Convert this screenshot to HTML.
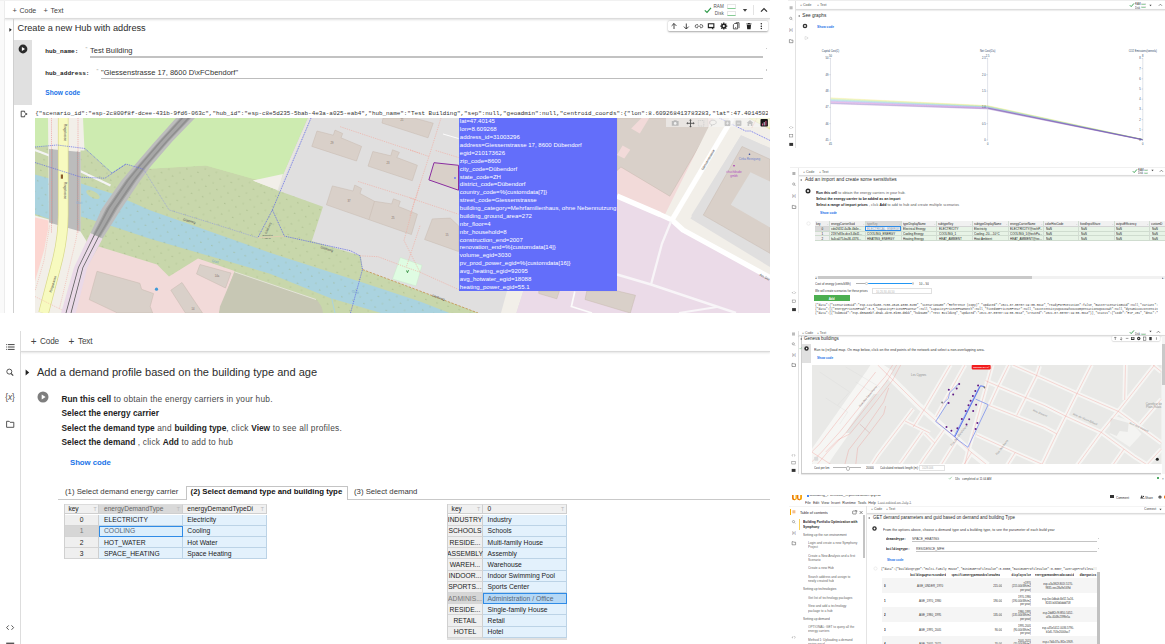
<!DOCTYPE html>
<html lang="en"><head><meta charset="utf-8"><title>Colab notebook screenshots</title>
<style>
html,body{margin:0;padding:0;background:#fff}
body{width:1165px;height:644px;position:relative;overflow:hidden;font-family:"Liberation Sans",sans-serif}
.panel{position:absolute;overflow:hidden;background:#fff}
.t{position:absolute;white-space:nowrap;margin:0}
.b{position:absolute;margin:0}
svg{overflow:hidden;display:block}
</style></head><body>
<div class="panel" style="left:0;top:0;width:770px;height:312.7px">
<div class="b" style="left:0px;top:0px;width:770px;height:1px;background:#f1f1f1;"></div>
<div class="b" style="left:4px;top:1px;width:1px;height:315px;background:#ececec;"></div>
<div class="b" style="left:0px;top:1px;width:4px;height:315px;background:#fafafa;"></div>
<div class="t" style='left:12.5px;top:5.53px;font:400 7.5px/9.75px "Liberation Sans",sans-serif;color:#444;'>+</div>
<div class="t" style='left:19.5px;top:5.95px;font:400 7px/9.1px "Liberation Sans",sans-serif;color:#444;'>Code</div>
<div class="t" style='left:43.5px;top:5.53px;font:400 7.5px/9.75px "Liberation Sans",sans-serif;color:#444;'>+</div>
<div class="t" style='left:50.5px;top:5.95px;font:400 7px/9.1px "Liberation Sans",sans-serif;color:#444;'>Text</div>
<div class="b" style="left:5px;top:17.5px;width:765px;height:1px;background:#dcdcdc;box-shadow:0 1px 2px rgba(0,0,0,.18)"></div>
<div class="b" style="left:13px;top:19px;width:1px;height:297px;background:#cfcfcf;"></div>
<svg class="b" style="left:7.5px;top:25.5px" width="6" height="8" viewBox="0 0 6 8"><path d="M1.4 1.9 L3.7 3.8 L1.4 5.700Z" fill="#222"/></svg>
<div class="t" style='left:17.5px;top:23.32px;font:400 9.2px/11.96px "Liberation Sans",sans-serif;color:#2a2a2a;'>Create a new Hub with address</div>
<div class="b" style="left:14px;top:40px;width:18px;height:64.5px;background:#e0e0e0;"></div>
<svg class="b" style="left:18px;top:44px" width="10" height="10" viewBox="0 0 10 10"><circle cx="5" cy="5" r="4.4" fill="#2b2b2b"/><path d="M3.9 2.9 L7 5 L3.9 7.1Z" fill="#fff"/></svg>
<div class="t" style='left:45.3px;top:48.2px;font:700 6.15px/8.0px "Liberation Mono",monospace;color:#222;'>hub_name:</div>
<div class="t" style='left:85.5px;top:46.25px;font:400 5px/6.5px "Liberation Sans",sans-serif;color:#9a9a9a;'>"</div>
<div class="t" style='left:90px;top:46.33px;font:400 7.5px/9.75px "Liberation Sans",sans-serif;color:#333;'>Test Building</div>
<div class="b" style="left:90px;top:56.4px;width:673px;height:1.4px;background:#c2c2c2;"></div>
<div class="t" style='left:45.3px;top:69.6px;font:700 6.15px/8.0px "Liberation Mono",monospace;color:#222;'>hub_address:</div>
<div class="t" style='left:96.5px;top:67.75px;font:400 5px/6.5px "Liberation Sans",sans-serif;color:#9a9a9a;'>"</div>
<div class="t" style='left:101px;top:68.03px;font:400 7.5px/9.75px "Liberation Sans",sans-serif;color:#333;'>"Giessenstrasse 17, 8600 D\xFCbendorf"</div>
<div class="b" style="left:101px;top:78px;width:662px;height:1px;background:#bdbdbd;"></div>
<div class="b" style="left:765.5px;top:47.8px;width:1.6px;height:1.6px;background:#c8c8c8;"></div>
<div class="b" style="left:765.5px;top:69.2px;width:1.6px;height:1.6px;background:#c8c8c8;"></div>
<div class="t" style='left:45.3px;top:88.81px;font:700 6.6px/8.58px "Liberation Sans",sans-serif;color:#1a73e8;'>Show code</div>
<svg class="b" style="left:702.5px;top:5.4px" width="10" height="10" viewBox="0 0 10 10"><path d="M1.800 5.400 L4 7.400 L8 2.800" stroke="#2e9a48" stroke-width="1.2" fill="none"/></svg>
<div class="t" style='left:713.5px;top:4.21px;font:400 4.6px/5.98px "Liberation Sans",sans-serif;color:#555;'>RAM</div>
<div class="t" style='left:714.8px;top:11.31px;font:400 4.6px/5.98px "Liberation Sans",sans-serif;color:#555;'>Disk</div>
<div class="b" style="left:726.8px;top:4.1px;width:9.6px;height:4.8px;background:#fff;box-sizing:border-box;border:0.5px solid #e6e6e6;border-bottom:0.9px solid #86cc95"></div>
<div class="b" style="left:726.8px;top:11.3px;width:9.6px;height:4.8px;background:#fff;box-sizing:border-box;border:0.5px solid #e6e6e6;border-bottom:0.9px solid #86cc95"></div>
<svg class="b" style="left:742px;top:8px" width="6" height="5" viewBox="0 0 6 5"><path d="M0.8 1 L5.2 1 L3 3.8Z" fill="#444"/></svg>
<div class="b" style="left:753px;top:5px;width:1px;height:10px;background:#e3e3e3;"></div>
<svg class="b" style="left:760px;top:7px" width="8" height="6" viewBox="0 0 8 6"><path d="M1 4.6 L4 1.6 L7 4.6" stroke="#333" stroke-width="1.3" fill="none"/></svg>
<div class="b" style="left:668px;top:20.8px;width:100px;height:10px;background:#fff;border-radius:1.5px;box-shadow:0 0.5px 2px rgba(0,0,0,.35)"></div>
<svg class="b" style="left:668px;top:20.5px" width="100" height="10" viewBox="668 21.5 100 10">
<g stroke="#333" stroke-width="0.9" fill="none">
<path d="M674 29.5 V24 M671.6 26.4 L674 24 L676.4 26.4"/>
<path d="M686.3 24 V29.5 M683.9 27.1 L686.3 29.5 L688.7 27.1"/>
<path d="M698 25.2 h-1.3 a1.5 1.5 0 0 0 0 3 h1.3 M700 25.2 h1.3 a1.5 1.5 0 0 1 0 3 h-1.3 M697.3 26.7 h3.4" stroke="#555"/>
</g>
<path d="M707.8 23.8 h6.6 v5 h-1.2 v1.4 l-1.6 -1.4 h-3.8z" fill="#222"/><rect x="708.9" y="24.8" width="4.4" height="2.6" fill="#fff"/>
<g transform="translate(723.8 26.6)"><circle r="2.6" fill="#222"/><g stroke="#222" stroke-width="1.3"><path d="M0 -3.5V3.5M-3.5 0H3.5M-2.5 -2.5L2.5 2.5M-2.5 2.5L2.5 -2.5"/></g><circle r="1.1" fill="#fff"/></g>
<path d="M734.6 24 h3 v5.4 h-4.2 v-4.2z" fill="none" stroke="#333" stroke-width="0.8"/><path d="M735.8 23.2 h3.2 v5.4" fill="none" stroke="#333" stroke-width="0.8"/><path d="M735.2 27.5 l1.2 .8 l-1.2 .8z" fill="#333"/>
<path d="M746.8 25.2 h4.2 l-.4 4.6 h-3.4z M746.3 24 h5.2 v.8 h-5.2z M748 23.4 h1.8 v.7 h-1.8z" fill="#222"/>
<g fill="#222"><circle cx="761.3" cy="24.3" r=".75"/><circle cx="761.3" cy="26.7" r=".75"/><circle cx="761.3" cy="29.1" r=".75"/></g>
</svg>
<svg class="b" style="left:19.5px;top:110px" width="9" height="8" viewBox="0 0 9 8"><path d="M4.6 1.2 H1.2 V6.8 H4.6 M4.6 1.2 V2.6 M4.6 6.8 V5.4" stroke="#333" stroke-width="0.9" fill="none"/><path d="M5.4 2.6 L7.6 4 L5.4 5.4Z" fill="#333"/></svg>
<div class="t" style='left:35.2px;top:109.75px;font:400 5.92px/7.7px "Liberation Mono",monospace;color:#333;width:732.6px;overflow:hidden;white-space:nowrap;'>{"scenario_id":"esp-2c800f8f-dcee-431b-9fd6-063c","hub_id":"esp-c8e5d235-5bab-4e3a-a025-eab4","hub_name":"Test Building","sep":null,"geoadmin":null,"centroid_coords":{"lon":8.609268413783283,"lat":47.40145020296136,"alt":null}}</div>
<svg class="b" style="left:35px;top:117.5px" width="735" height="195" viewBox="35 117.5 735 195">
<defs><pattern id="dots" width="11.6" height="11" patternUnits="userSpaceOnUse" patternTransform="rotate(17)"><circle cx="2" cy="2" r=".62" fill="#9aae7c" opacity=".7"/><circle cx="7.6" cy="7.4" r=".62" fill="#9aae7c" opacity=".7"/></pattern></defs>
<rect x="35" y="117.5" width="735" height="195" fill="#e0dfdf"/>
<polygon points="35,117.5 307.5,117.5 278.5,184 277.5,189.7 279.2,190.5 323,206.3 311.8,240.5 360.8,255.3 362.5,269 420,290.5 478.7,312.5 35,312.5" fill="#c8d7ab" />
<polygon points="35,117.5 307.5,117.5 279.5,182 254,178.5 206,165 143.5,168.5 126,163.5 112,172.5 85,148 57,144.7 35,146.5" fill="#cdebb0" />
<polygon points="253,180 283,173.5 277.5,189.5" fill="#f2efe9" />
<polyline points="309.5,117.5 277.5,190" fill="none" stroke="#e9e6df" stroke-width="1.6" />
<polygon points="81,183 112,193 150,209.7 220,234.5 270,252.3 362.5,282 420,301 449.5,312.5 381,312.5 330,297.4 270,273.2 220,258.6 150,238.3 110.7,225.3 81,216" fill="#aad3df" />
<polygon points="35,174 49.5,178 49.5,218.5 35,213.5" fill="#aad3df" />
<ellipse cx="93" cy="194" rx="7.5" ry="3.2" transform="rotate(28 93 194)" fill="#c8d7ab"/>
<polygon points="35,117.5 307.5,117.5 278.5,184 277.5,189.7 279.2,190.5 323,206.3 311.8,240.5 360.8,255.3 362.5,269 420,290.5 478.7,312.5 35,312.5" fill="url(#dots)"/>
<polygon points="35,117.5 307.5,117.5 279.5,182 254,178.5 206,165 143.5,168.5 126,163.5 112,172.5 85,148 57,144.7 35,146.5" fill="#cdebb0" />
<polygon points="253,180 283,173.5 277.5,189.5" fill="#f2efe9" />
<polyline points="35,149.5 52,156" fill="none" stroke="#f4f4f4" stroke-width="2.2" />
<polyline points="80,170.5 110.5,185" fill="none" stroke="#f4f4f4" stroke-width="2.4" />
<polygon points="98.7,246 157,264 169,276 198,258 234.6,270.5 219,312.5 60,312.5" fill="#f2dad9" />
<path d="M234.6 271.4 L316 299 Q322 304 323 312.5 L219 312.5 L220 306 Z" fill="#c7c7b4"/>
<polyline points="234.6,271.4 316,299" fill="none" stroke="#e4e4d8" stroke-width="1" />
<polygon points="48,117.5 83,117.5 84.5,150 80.5,150 80.5,231 86.6,240.7 63.5,312.5 35,312.5 35,215 49,219" fill="#f2efe9" />
<polygon points="35,217 48.5,220 48.2,228 44,250 35,281" fill="#fcd6d1" />
<polygon points="49,148.5 80.6,151.5 80.6,231 49,222" fill="#bcbcbc" />
<polyline points="52,148.5 52,223" fill="none" stroke="#a8a8a8" stroke-width="1.2" />
<polyline points="77.5,151 77.5,230" fill="none" stroke="#a8a8a8" stroke-width="1.2" />
<path d="M63.2 117.5 L63.2 215 Q63 240 55.5 267 L43.6 312.5" fill="none" stroke="#d9d98a" stroke-width="10.6"/>
<path d="M63.2 117.5 L63.2 215 Q63 240 55.5 267 L43.6 312.5" fill="none" stroke="#f7fabf" stroke-width="9.2"/>
<polyline points="51.5,117.5 51.5,232" fill="none" stroke="#ee9090" stroke-width="0.6" stroke-dasharray="1.2 0.9"/>
<polyline points="78,117.5 78,232" fill="none" stroke="#ee9090" stroke-width="0.6" stroke-dasharray="1.2 0.9"/>
<polyline points="78.2,225 76,239 59.3,308.8" fill="none" stroke="#f0a8a0" stroke-width="0.5" stroke-dasharray="1.2 0.9"/>
<polyline points="49.6,225 44,260 35,290.7" fill="none" stroke="#f0a8a0" stroke-width="0.5" stroke-dasharray="1.2 0.9"/>
<polyline points="35,296 63,310" fill="none" stroke="#f0a8a0" stroke-width="0.5" stroke-dasharray="1.2 0.9"/>
<polygon points="90.5,232.4 74.0,267 61.4,311.6 61.0,313 75.8,313 76.1,311.6 87.3,267 102.6,238.0" fill="#ead9e8" />
<polygon points="185.5,107 176,117.5 153.6,142.5 133.0,166.5 121.5,180 102.0,208 94.2,224.7 90.5,232.4 102.6,238.0 111.0,224.7 121.5,208 140.3,180 150.2,166.5 172.5,140.7 195,117.5 204.5,107" fill="#bdbdbd" />
<polygon points="189.3,107.0 179.8,117.5 157.38,142.14 136.44,166.5 125.26,180.0 105.9,208.0 97.56,224.7 92.92,233.52 100.18,236.88 107.64,224.7 117.6,208.0 136.54,180.0 146.76,166.5 168.72,141.06 191.2,117.5 200.7,107.0" fill="#a6a6a6" />
<polygon points="190.63,107.0 181.13,117.5 158.7,142.01 137.64,166.5 126.58,180.0 107.27,208.0 98.74,224.7 93.77,233.91 95.22,234.58 100.75,224.7 109.61,208.0 128.83,180.0 139.71,166.5 160.97,141.8 183.41,117.5 192.91,107.0" fill="#8f8f8f" />
<polygon points="197.09,107.0 187.59,117.5 165.13,141.4 143.49,166.5 132.97,180.0 113.89,208.0 104.45,224.7 97.88,235.82 99.33,236.49 106.46,224.7 116.23,208.0 135.22,180.0 145.56,166.5 167.4,141.19 189.87,117.5 199.37,107.0" fill="#8f8f8f" />
<polygon points="94.13,234.08 77.99,267.0 65.81,311.6 65.44,313.0 66.33,313.0 66.69,311.6 78.79,267.0 94.86,234.42" fill="#5f5f5f" />
<polygon points="98.24,235.98 82.51,267.0 70.81,311.6 70.47,313.0 71.36,313.0 71.69,311.6 83.31,267.0 98.97,236.32" fill="#5f5f5f" />
<polygon points="97,270.8 139.9,282.8 141.6,288.8 153.6,293.1 150.2,306 152.7,312.5 117.5,312.5 89.2,299.1" fill="#d9d0c9" stroke="#c7b9ae" stroke-width="0.5"/>
<polygon points="170.8,289.7 182,282 202.5,312.5 185.4,312.5" fill="#d9d0c9" stroke="#c7b9ae" stroke-width="0.5"/>
<polygon points="200,264 231,272.5 225.5,287.5 196.5,273.4" fill="#d9d0c9" stroke="#c7b9ae" stroke-width="0.5"/>
<polygon points="317,130.5 333.3,134.7 335,129.6 342.7,133 341,137.3 361.6,145.9 356.5,160.5 311.8,145.9" fill="#d9d0c9" stroke="#c7b9ae" stroke-width="0.5"/>
<polygon points="372.8,151 390.8,155.3 392.5,149.3 399.4,151.9 396.8,157 417.4,164.8 412.3,180.2 368,165.6" fill="#d9d0c9" stroke="#c7b9ae" stroke-width="0.5"/>
<polygon points="383,117.5 414,117.5 433.2,122.7 428,137.3 382,122.5" fill="#d9d0c9" stroke="#c7b9ae" stroke-width="0.5"/>
<polygon points="332.4,185.4 353,190.5 354.8,184.5 361.6,188 360,193 374.5,200.8 391.7,203.4 393.4,198.3 400.3,200.8 398.5,206 417.4,213.7 411.4,234 326.4,204.3" fill="#d9d0c9" stroke="#c7b9ae" stroke-width="0.5"/>
<polyline points="374.5,200.8 369,219" fill="none" stroke="#c7b9ae" stroke-width="0.5" />
<polygon points="432.3,218.4 450.3,217.6 458.5,225.3 458.5,251 424.6,239" fill="#d9d0c9" stroke="#c7b9ae" stroke-width="0.5"/>
<polygon points="434,162.2 458.5,164.8 458.5,189.7 428.9,179.4" fill="#d9d0c9" stroke="#8a2da0" stroke-width="1"/>
<circle cx="455" cy="177.5" r="0.9" fill="#636efa"/>
<polygon points="400.3,257 422,264.8 416,285.4 392.5,278.5" fill="#dffce2" stroke="#c3e6c6" stroke-width="0.4"/>
<path d="M406.5 270 l1 2.2 l1 -2.6" stroke="#2e8b3a" stroke-width="0.9" fill="none"/>
<polyline points="340.2,126.2 420,152.8" fill="none" stroke="#f2a79c" stroke-width="0.6" stroke-dasharray="1.3 1"/>
<polyline points="358.2,181 415.7,199 420,183.7" fill="none" stroke="#f2a79c" stroke-width="0.6" stroke-dasharray="1.3 1"/>
<polyline points="441,117.5 429,156 415,199 410,215" fill="none" stroke="#f2a79c" stroke-width="0.6" stroke-dasharray="1.3 1"/>
<polyline points="410,149.5 429,156" fill="none" stroke="#f2a79c" stroke-width="0.6" stroke-dasharray="1.3 1"/>
<polyline points="435.7,150 458.5,157" fill="none" stroke="#f2a79c" stroke-width="0.6" stroke-dasharray="1.3 1"/>
<polyline points="410,197.5 458.5,213.7" fill="none" stroke="#f2a79c" stroke-width="0.6" stroke-dasharray="1.3 1"/>
<polyline points="415,199 404,240 420,271.7 458.5,289" fill="none" stroke="#f2a79c" stroke-width="0.6" stroke-dasharray="1.3 1"/>
<polyline points="360,255.3 378,256.2 405.4,266.5 420,271.7" fill="none" stroke="#f2a79c" stroke-width="0.6" stroke-dasharray="1.3 1"/>
<polyline points="420,225.3 406.3,266.5" fill="none" stroke="#f2a79c" stroke-width="0.6" stroke-dasharray="1.3 1"/>
<polyline points="443,133.5 458.5,138" fill="none" stroke="#ffffff" stroke-width="0.9" />
<polyline points="35,146.5 57,144.5 85,148 112,172.5 126,163.5 143.5,168.7" fill="none" stroke="#5d67e6" stroke-width="0.7" stroke-dasharray="1.1 0.8"/>
<polyline points="35,162 81.5,176.8 105,177.7 126,163.5" fill="none" stroke="#5d67e6" stroke-width="0.7" stroke-dasharray="1.1 0.8"/>
<polyline points="143.5,168.7 169,209.4 220,225.3 257.8,237.3" fill="none" stroke="#8088e8" stroke-width="0.5" stroke-dasharray="1.1 0.8"/>
<polyline points="311,117.5 272.4,209.4 257.8,237.3" fill="none" stroke="#5d67e6" stroke-width="0.8" stroke-dasharray="1.1 0.8"/>
<polyline points="272.4,209.4 284.4,235.6 350.5,250.2 360,255.3 362.5,269 350.5,312.5" fill="none" stroke="#5d67e6" stroke-width="0.8" stroke-dasharray="1.1 0.8"/>
<polyline points="257.8,237.3 284.4,235.6" fill="none" stroke="#efc8b4" stroke-width="0.6" />
<polyline points="362.5,269 420,290.5 478,312.5" fill="none" stroke="#c6975a" stroke-width="0.9" stroke-dasharray="2.4 1.4"/>
<polyline points="331.6,297.4 335,312.5" fill="none" stroke="#aad3df" stroke-width="1" />
<text transform="translate(63.6 132) rotate(90) scale(.25)" font-family="Liberation Sans, sans-serif" font-size="13.2" font-weight="400" fill="#444" text-anchor="middle">Ringstrasse</text>
<text transform="translate(63.6 190) rotate(90) scale(.25)" font-family="Liberation Sans, sans-serif" font-size="13.2" font-weight="400" fill="#444" text-anchor="middle">Ringstrasse</text>
<text transform="translate(54 284) rotate(-73) scale(.25)" font-family="Liberation Sans, sans-serif" font-size="13.2" font-weight="400" fill="#444" text-anchor="middle">Ringstrasse</text>
<text transform="translate(189 221.5) rotate(14) scale(.25)" font-family="Liberation Sans, sans-serif" font-size="13.2" font-weight="400" fill="#555" text-anchor="middle">Glattweg</text>
<text transform="translate(326.5 249.5) rotate(16) scale(.25)" font-family="Liberation Sans, sans-serif" font-size="13.2" font-weight="400" fill="#555" text-anchor="middle">Glattweg</text>
<text transform="translate(438 298) rotate(18) scale(.25)" font-family="Liberation Sans, sans-serif" font-size="13.2" font-weight="400" fill="#555" text-anchor="middle">Glattweg</text>
<text transform="translate(269 228) rotate(-66) scale(.25)" font-family="Liberation Sans, sans-serif" font-size="12" font-weight="400" fill="#555" text-anchor="middle">Glattweg</text>
<text transform="translate(267.5 235) scale(.25)" font-family="Liberation Sans, sans-serif" font-size="9.6" font-weight="400" fill="#555" text-anchor="middle">Djamoent</text>
<text transform="translate(267.5 238.6) scale(.25)" font-family="Liberation Sans, sans-serif" font-size="9.6" font-weight="400" fill="#555" text-anchor="middle">430 m</text>
<text transform="translate(215 262) rotate(14) scale(.25)" font-family="Liberation Sans, sans-serif" font-size="13.6" font-weight="400" fill="#7aa7c8" text-anchor="middle">Glatt</text>
<text transform="translate(355 292.5) rotate(14) scale(.25)" font-family="Liberation Sans, sans-serif" font-size="13.6" font-weight="400" fill="#7aa7c8" text-anchor="middle">Glatt</text>
<text transform="translate(79 203) scale(.25)" font-family="Liberation Sans, sans-serif" font-size="12.8" font-weight="400" fill="#8fb3d6" text-anchor="middle">Glatt</text>
<text transform="translate(332 143.5) scale(.25)" font-family="Liberation Sans, sans-serif" font-size="10.4" font-weight="400" fill="#7a6a60" text-anchor="middle">29</text>
<text transform="translate(388 163) scale(.25)" font-family="Liberation Sans, sans-serif" font-size="10.4" font-weight="400" fill="#7a6a60" text-anchor="middle">23</text>
<text transform="translate(349 201) scale(.25)" font-family="Liberation Sans, sans-serif" font-size="10.4" font-weight="400" fill="#7a6a60" text-anchor="middle">37</text>
<text transform="translate(393 218) scale(.25)" font-family="Liberation Sans, sans-serif" font-size="10.4" font-weight="400" fill="#7a6a60" text-anchor="middle">25</text>
<text transform="translate(402 120.5) scale(.25)" font-family="Liberation Sans, sans-serif" font-size="10.4" font-weight="400" fill="#7a6a60" text-anchor="middle">21</text>
<text transform="translate(217 276.5) scale(.25)" font-family="Liberation Sans, sans-serif" font-size="10.4" font-weight="400" fill="#7a6a60" text-anchor="middle">14a</text>
<text transform="translate(193 309) scale(.25)" font-family="Liberation Sans, sans-serif" font-size="10.4" font-weight="400" fill="#7a6a60" text-anchor="middle">14</text>
<text transform="translate(447 235) scale(.25)" font-family="Liberation Sans, sans-serif" font-size="10.4" font-weight="400" fill="#7a6a60" text-anchor="middle">15</text>
<rect x="60.8" y="174" width="2.2" height="4.2" fill="#8b5a2b"/>
<circle cx="156.5" cy="288.7" r="1.6" fill="#3f9ad8"/>
<polygon points="507,290.5 523.3,290.5 516.4,312.5 501,312.5" fill="#f2efe9" />
<polygon points="523.3,290.5 617,290.5 617,195 672,219 770,277 770,312.5 516.4,312.5" fill="#ebdbe8" />
<polygon points="617,270 617,312.5 560,312.5 520,312.5 523.3,290.5 617,290.5" fill="#ebdbe8" />
<polygon points="617,117.5 713,117.5 666.4,214.6 617,194" fill="#f2dad9" />
<polygon points="617,117.5 707.6,117.5 708.5,129.6 669.8,195.7 620.9,166.5 617,170" fill="#d9d0c9" stroke="#c7b9ae" stroke-width="0.5"/>
<polygon points="641.5,117.5 649.2,117.5 639.8,133 631.2,127.9" fill="#f2dad9" />
<polygon points="622.6,145 630.3,149.3 624.3,158 617,154.5" fill="#f2dad9" />
<polygon points="713,117.5 770,117.5 770,147.6 741,134.7 690.4,218 770,266.5 770,277 672,222 664,216" fill="#f2efe9" />
<polygon points="741,134.7 770,147.6 770,259.6 691.3,215" fill="#e0dfdf" />
<polygon points="742,146 770,158.8 770,252.8 703.3,214.6" fill="#d9d0c9" stroke="#c7b9ae" stroke-width="0.5"/>
<polygon points="750.5,171.7 770,181 770,227 730.8,204.3" fill="#dfdfdf" />
<polygon points="748.6,117.4 770,117.4 770,128.5" fill="#f6f9c0" stroke="#d5d78f" stroke-width="0.5"/>
<polyline points="719.2,117.4 745.5,130.5 750.6,130.5 770.7,140.3" fill="none" stroke="#7378ee" stroke-width="0.9" stroke-dasharray="1.1 0.8"/>
<polyline points="757,117.5 752,127" fill="none" stroke="#f2a79c" stroke-width="0.5" />
<polyline points="732.5,117.5 672,219.5" fill="none" stroke="#ffffff" stroke-width="5.2" />
<polyline points="617,195.5 660,214 672,219.5 683,229.5 770,277" fill="none" stroke="#ffffff" stroke-width="5.2" stroke-linejoin="round"/>
<polyline points="671,221 662,243 651,284" fill="none" stroke="#f8f5f8" stroke-width="2.3" />
<polyline points="617,274 651,284 736,312.5" fill="none" stroke="#f8f5f8" stroke-width="2.4" />
<polyline points="679,312.5 717,306.5" fill="none" stroke="#f8f5f8" stroke-width="2" />
<polyline points="574.8,291 571.4,306 592,312.5" fill="none" stroke="#fbfbfb" stroke-width="1.7" />
<polygon points="538.8,290.5 559.4,290.5 556.8,298.3 538.8,293" fill="#d9d0c9" stroke="#c7b9ae" stroke-width="0.5"/>
<polygon points="586.8,290.5 617.5,290.5 635.5,294.8 630.3,312.5 620,309.5 585,299" fill="#d9d0c9" stroke="#c7b9ae" stroke-width="0.5"/>
<text transform="translate(709 160) rotate(-60) scale(.25)" font-family="Liberation Sans, sans-serif" font-size="13.6" font-weight="400" fill="#333" text-anchor="middle">Giessenstrasse</text>
<text transform="translate(764 277.5) rotate(29) scale(.25)" font-family="Liberation Sans, sans-serif" font-size="13.2" font-weight="400" fill="#333" text-anchor="middle">Am Gie</text>
<text transform="translate(749.5 159) scale(.25)" font-family="Liberation Sans, sans-serif" font-size="12" font-weight="400" fill="#6b7fd0" text-anchor="middle">Cirka Reinigung</text>
<circle cx="749.5" cy="153.7" r=".8" fill="#34479c"/>
<text transform="translate(734 172) scale(.25)" font-family="Liberation Sans, sans-serif" font-size="12" font-weight="400" fill="#b24fc2" text-anchor="middle">chuchibude</text>
<text transform="translate(734 176) scale(.25)" font-family="Liberation Sans, sans-serif" font-size="12" font-weight="400" fill="#b24fc2" text-anchor="middle">gmbh</text>
<circle cx="734" cy="165.3" r=".8" fill="#a11fb0"/>
</svg>
<div class="b" style='left:458.5px;top:117.5px;width:158.5px;height:173px;background:#636efa;color:#fff;font:400 6.05px/7.87px "Liberation Sans",sans-serif;white-space:nowrap;overflow:hidden;padding:0.9px 0 0 1.3px;box-sizing:border-box'>lat=47.40145<br>lon=8.609268<br>address_id=31003296<br>address=Giessenstrasse 17, 8600 Dübendorf<br>egid=210173626<br>zip_code=8600<br>city_code=Dübendorf<br>state_code=ZH<br>district_code=Dübendorf<br>country_code=%{customdata[7]}<br>street_code=Giessenstrasse<br>building_category=Mehrfamilienhaus, ohne Nebennutzung<br>building_ground_area=272<br>nbr_floor=4<br>nbr_household=8<br>construction_end=2007<br>renovation_end=%{customdata[14]}<br>volume_egid=3030<br>pv_prod_power_egid=%{customdata[16]}<br>avg_heating_egid=92095<br>avg_hotwater_egid=18088<br>heating_power_egid=55.1</div>
<div class="b" style="left:666px;top:117.5px;width:104px;height:9.6px;background:rgba(246,246,246,.55)"></div>
<svg class="b" style="left:666px;top:117.5px" width="104" height="10" viewBox="666 117.5 104 10">
<g fill="#b9b9b9"><path d="M671.8 120.6 h1.6 l.7 -.9 h2.2 l.7 .9 h1.6 v4.6 h-6.8z"/><circle cx="675.2" cy="122.9" r="1.3" fill="#f3f3f3"/></g>
<g stroke="#4f4f4f" stroke-width="0.9" fill="none"><path d="M690.5 119.6 V126 M687.3 122.8 H693.7"/></g>
<g fill="#4f4f4f"><path d="M690.5 118.6 l1.3 1.5 h-2.6z M690.5 127 l1.3 -1.5 h-2.6z M686.3 122.8 l1.5 -1.3 v2.6z M694.7 122.8 l-1.5 -1.3 v2.6z"/></g>
<rect x="698.4" y="120" width="5.4" height="5.6" fill="none" stroke="#c4c4c4" stroke-width="0.7" stroke-dasharray="1 0.8"/>
<path d="M713 119.6 c-2.2 0 -3.4 1.2 -3.4 2.5 c0 1.2 1 2 2.2 2.1 l-.6 1.6 l1.4 -1.6 c2.4 0 3.6 -1.1 3.6 -2.3 c0 -1.3 -1.2 -2.3 -3.2 -2.3z" fill="none" stroke="#c6c6c6" stroke-width="0.7"/>
<g fill="#c4c4c4"><rect x="724.6" y="120" width="5.8" height="5.4" rx=".6"/><rect x="735.6" y="120" width="5.8" height="5.4" rx=".6"/><path d="M750 119.6 l3.4 3 h-1 v2.8 h-1.6 v-1.8 h-1.6 v1.8 h-1.6 v-2.8 h-1z"/></g>
<g stroke="#f3f3f3" stroke-width=".7"><path d="M726 122.7 h3 M727.5 121.2 v3 M737 122.7 h3"/></g>
<rect x="760.5" y="118.6" width="7.4" height="7.4" rx=".8" fill="#161616"/>
<g fill="#e05a8a"><rect x="762" y="123" width="1" height="2"/><rect x="763.7" y="121.6" width="1" height="3.4" fill="#d6d6f0"/><rect x="765.4" y="120.4" width="1" height="4.6"/></g>
</svg>

</div>
<div class="panel" style="left:0;top:322px;width:770px;height:322px">
<div style="position:absolute;left:0;top:-322px;width:770px;height:644px">
<div class="b" style="left:19.9px;top:331px;width:1px;height:313px;background:#dddddd;"></div>
<div class="t" style='left:30.8px;top:334.8px;font:400 10px/13.0px "Liberation Sans",sans-serif;color:#444;'>+</div>
<div class="t" style='left:40px;top:336.57px;font:400 8.2px/10.66px "Liberation Sans",sans-serif;color:#444;letter-spacing:-0.15px;'>Code</div>
<div class="t" style='left:68.6px;top:334.8px;font:400 10px/13.0px "Liberation Sans",sans-serif;color:#444;'>+</div>
<div class="t" style='left:78px;top:336.57px;font:400 8.2px/10.66px "Liberation Sans",sans-serif;color:#444;letter-spacing:-0.15px;'>Text</div>
<div class="b" style="left:21px;top:350.5px;width:749px;height:1px;background:#dadada;box-shadow:0 1px 2px rgba(0,0,0,.16)"></div>
<svg class="b" style="left:0;top:330px" width="20" height="314" viewBox="0 330 20 314">
<g stroke="#444" stroke-width="1"><path d="M8 344.6 H14.6 M8 347 H14.6 M8 349.4 H14.6"/><path d="M6.200 344.6 h1 M6.200 347 h1 M6.200 349.4 h1"/></g>
<circle cx="9.3" cy="371.6" r="2.5" fill="none" stroke="#444" stroke-width="0.9"/><path d="M11.1 373.5 L13.2 375.7" stroke="#444" stroke-width="1.1"/>
<path d="M6.600 421.300 h2.600 l.9 1 h3.700 v5 h-7.200z" fill="none" stroke="#444" stroke-width="0.9"/>
<path d="M8.7 625.4 L6.6 627.6 L8.7 629.8 M11.5 625.4 L13.6 627.6 L11.5 629.8" fill="none" stroke="#444" stroke-width="0.9"/>
<rect x="6.2" y="642.6" width="8" height="2" fill="#555"/>
</svg>
<div class="t" style='left:5.2px;top:392.67px;font:400 8.2px/10.66px "Liberation Sans",sans-serif;color:#4a4a4a;'>{<i>x</i>}</div>
<svg class="b" style="left:24px;top:367.5px" width="7" height="9" viewBox="0 0 7 9"><path d="M1.6 1.6 L5.2 4.5 L1.6 7.4Z" fill="#222"/></svg>
<div class="t" style='left:37px;top:364.61px;font:400 11.06px/14.38px "Liberation Sans",sans-serif;color:#2c2c2c;'>Add a demand profile based on the building type and age</div>
<svg class="b" style="left:37.2px;top:390.8px" width="12" height="12" viewBox="0 0 12 12"><circle cx="6" cy="6" r="5.5" fill="#7e7e7e"/><path d="M4.7 3.5 L8.6 6 L4.7 8.5Z" fill="#fff"/></svg>
<div class="t" style='left:61.5px;top:393.77px;font:400 8.35px/10.86px "Liberation Sans",sans-serif;color:#4a4a4a;letter-spacing:0.22px;'><b style="letter-spacing:0;color:#1f1f1f">Run this cell</b> to obtain the energy carriers in your hub.</div>
<div class="t" style='left:61.5px;top:408.47px;font:400 8.35px/10.86px "Liberation Sans",sans-serif;color:#4a4a4a;letter-spacing:0.22px;'><b style="letter-spacing:0;color:#1f1f1f">Select the energy carrier</b></div>
<div class="t" style='left:61.5px;top:422.87px;font:400 8.35px/10.86px "Liberation Sans",sans-serif;color:#4a4a4a;letter-spacing:0.22px;'><b style="letter-spacing:0;color:#1f1f1f">Select the demand type</b> and <b style="letter-spacing:0;color:#1f1f1f">building type</b>, click <b style="letter-spacing:0;color:#1f1f1f">View</b> to see all profiles.</div>
<div class="t" style='left:61.5px;top:436.57px;font:400 8.35px/10.86px "Liberation Sans",sans-serif;color:#4a4a4a;letter-spacing:0.22px;'><b style="letter-spacing:0;color:#1f1f1f">Select the demand</b> , click <b style="letter-spacing:0;color:#1f1f1f">Add</b> to add to hub</div>
<div class="t" style='left:70px;top:458.23px;font:700 7.8px/10.14px "Liberation Sans",sans-serif;color:#1a73e8;letter-spacing:-0.05px;'>Show code</div>
<div class="b" style="left:58px;top:499px;width:712px;height:1px;background:#c9c9c9;"></div>
<div class="b" style="left:186px;top:485.5px;width:161.5px;height:14.5px;background:#fff;border:1px solid #c4c4c4;border-bottom:none;box-sizing:border-box"></div>
<div class="t" style='left:65px;top:487.16px;font:400 7.75px/10.08px "Liberation Sans",sans-serif;color:#3a3a3a;'>(1) Select demand energy carrier</div>
<div class="t" style='left:190.6px;top:487.33px;font:700 7.8px/10.14px "Liberation Sans",sans-serif;color:#111;'>(2) Select demand type and building type</div>
<div class="t" style='left:354px;top:487.16px;font:400 7.75px/10.08px "Liberation Sans",sans-serif;color:#3a3a3a;'>(3) Select demand</div>
<div class="b" style="left:63.8px;top:503.7px;width:35.6px;height:10.8px;background:#f0f0f0;border-right:1px solid #cfcfcf;border-bottom:1px solid #cfcfcf;border-top:1px solid #dcdcdc;box-sizing:border-box"></div>
<div class="t" style='left:68.39999999999999px;top:505.31px;font:400 6.6px/8.58px "Liberation Sans",sans-serif;color:#222;'>key</div>
<div class="t" style='left:93.4px;top:506.12px;font:400 5.2px/6.76px "Liberation Sans",sans-serif;color:#b8b8b8;'>T</div>
<div class="b" style="left:99.4px;top:503.7px;width:83.3px;height:10.8px;background:#d9d9d9;border-right:1px solid #cfcfcf;border-bottom:1px solid #cfcfcf;border-top:1px solid #dcdcdc;box-sizing:border-box"></div>
<div class="t" style='left:104.0px;top:505.31px;font:400 6.6px/8.58px "Liberation Sans",sans-serif;color:#666;'>energyDemandType</div>
<div class="t" style='left:176.7px;top:506.12px;font:400 5.2px/6.76px "Liberation Sans",sans-serif;color:#b8b8b8;'>T</div>
<div class="b" style="left:182.7px;top:503.7px;width:84.1px;height:10.8px;background:#f0f0f0;border-right:1px solid #cfcfcf;border-bottom:1px solid #cfcfcf;border-top:1px solid #dcdcdc;box-sizing:border-box"></div>
<div class="t" style='left:187.29999999999998px;top:505.31px;font:400 6.6px/8.58px "Liberation Sans",sans-serif;color:#222;'>energyDemandTypeDi</div>
<div class="t" style='left:260.79999999999995px;top:506.12px;font:400 5.2px/6.76px "Liberation Sans",sans-serif;color:#b8b8b8;'>T</div>
<div class="b" style="left:63.8px;top:514.5px;width:35.6px;height:11.22px;background:#efefef;border-right:1px solid #cfcfcf;border-bottom:1px solid #d4d4d4;box-sizing:border-box"></div>
<div class="t" style='left:63.8px;top:516.12px;font:400 6.75px/8.78px "Liberation Sans",sans-serif;color:#222;text-align:center;width:35.6px;overflow:hidden;'>0</div>
<div class="b" style="left:99.4px;top:514.5px;width:83.3px;height:11.22px;background:#e3f1fc;border-right:1px solid #bcd3e6;border-bottom:1px solid #bcd3e6;box-sizing:border-box"></div>
<div class="t" style='left:104.0px;top:516.12px;font:400 6.75px/8.78px "Liberation Sans",sans-serif;color:#1c1c1c;'>ELECTRICITY</div>
<div class="b" style="left:182.7px;top:514.5px;width:84.1px;height:11.22px;background:#e3f1fc;border-right:1px solid #bcd3e6;border-bottom:1px solid #bcd3e6;box-sizing:border-box"></div>
<div class="t" style='left:187.29999999999998px;top:516.12px;font:400 6.75px/8.78px "Liberation Sans",sans-serif;color:#1c1c1c;'>Electricity</div>
<div class="b" style="left:63.8px;top:525.72px;width:35.6px;height:11.22px;background:#d6d6d6;border-right:1px solid #cfcfcf;border-bottom:1px solid #d4d4d4;box-sizing:border-box"></div>
<div class="t" style='left:63.8px;top:527.34px;font:400 6.75px/8.78px "Liberation Sans",sans-serif;color:#777;text-align:center;width:35.6px;overflow:hidden;'>1</div>
<div class="b" style="left:99.4px;top:525.72px;width:83.3px;height:11.22px;background:#dbeefc;border:1px solid #2f8be6;box-sizing:border-box"></div>
<div class="t" style='left:104.0px;top:527.34px;font:400 6.75px/8.78px "Liberation Sans",sans-serif;color:#567;'>COOLING</div>
<div class="b" style="left:182.7px;top:525.72px;width:84.1px;height:11.22px;background:#e3f1fc;border-right:1px solid #bcd3e6;border-bottom:1px solid #bcd3e6;box-sizing:border-box"></div>
<div class="t" style='left:187.29999999999998px;top:527.34px;font:400 6.75px/8.78px "Liberation Sans",sans-serif;color:#1c1c1c;'>Cooling</div>
<div class="b" style="left:63.8px;top:536.94px;width:35.6px;height:11.22px;background:#efefef;border-right:1px solid #cfcfcf;border-bottom:1px solid #d4d4d4;box-sizing:border-box"></div>
<div class="t" style='left:63.8px;top:538.56px;font:400 6.75px/8.78px "Liberation Sans",sans-serif;color:#222;text-align:center;width:35.6px;overflow:hidden;'>2</div>
<div class="b" style="left:99.4px;top:536.94px;width:83.3px;height:11.22px;background:#e3f1fc;border-right:1px solid #bcd3e6;border-bottom:1px solid #bcd3e6;box-sizing:border-box"></div>
<div class="t" style='left:104.0px;top:538.56px;font:400 6.75px/8.78px "Liberation Sans",sans-serif;color:#1c1c1c;'>HOT_WATER</div>
<div class="b" style="left:182.7px;top:536.94px;width:84.1px;height:11.22px;background:#e3f1fc;border-right:1px solid #bcd3e6;border-bottom:1px solid #bcd3e6;box-sizing:border-box"></div>
<div class="t" style='left:187.29999999999998px;top:538.56px;font:400 6.75px/8.78px "Liberation Sans",sans-serif;color:#1c1c1c;'>Hot Water</div>
<div class="b" style="left:63.8px;top:548.16px;width:35.6px;height:11.22px;background:#efefef;border-right:1px solid #cfcfcf;border-bottom:1px solid #d4d4d4;box-sizing:border-box"></div>
<div class="t" style='left:63.8px;top:549.78px;font:400 6.75px/8.78px "Liberation Sans",sans-serif;color:#222;text-align:center;width:35.6px;overflow:hidden;'>3</div>
<div class="b" style="left:99.4px;top:548.16px;width:83.3px;height:11.22px;background:#e3f1fc;border-right:1px solid #bcd3e6;border-bottom:1px solid #bcd3e6;box-sizing:border-box"></div>
<div class="t" style='left:104.0px;top:549.78px;font:400 6.75px/8.78px "Liberation Sans",sans-serif;color:#1c1c1c;'>SPACE_HEATING</div>
<div class="b" style="left:182.7px;top:548.16px;width:84.1px;height:11.22px;background:#e3f1fc;border-right:1px solid #bcd3e6;border-bottom:1px solid #bcd3e6;box-sizing:border-box"></div>
<div class="t" style='left:187.29999999999998px;top:549.78px;font:400 6.75px/8.78px "Liberation Sans",sans-serif;color:#1c1c1c;'>Space Heating</div>
<div class="b" style="left:63.8px;top:503.7px;width:1px;height:55.68000000000001px;background:#d0d0d0;"></div>
<div class="b" style="left:447px;top:503.7px;width:36px;height:10.8px;background:#f0f0f0;border-right:1px solid #cfcfcf;border-bottom:1px solid #cfcfcf;border-top:1px solid #dcdcdc;box-sizing:border-box"></div>
<div class="t" style='left:451.6px;top:505.31px;font:400 6.6px/8.58px "Liberation Sans",sans-serif;color:#222;'>key</div>
<div class="t" style='left:477px;top:506.12px;font:400 5.2px/6.76px "Liberation Sans",sans-serif;color:#b8b8b8;'>T</div>
<div class="b" style="left:483px;top:503.7px;width:84px;height:10.8px;background:#f0f0f0;border-right:1px solid #cfcfcf;border-bottom:1px solid #cfcfcf;border-top:1px solid #dcdcdc;box-sizing:border-box"></div>
<div class="t" style='left:487.6px;top:505.31px;font:400 6.6px/8.58px "Liberation Sans",sans-serif;color:#222;'>0</div>
<div class="t" style='left:561px;top:506.12px;font:400 5.2px/6.76px "Liberation Sans",sans-serif;color:#b8b8b8;'>T</div>
<div class="b" style="left:447px;top:514.5px;width:36px;height:11.22px;background:#efefef;border-right:1px solid #cfcfcf;border-bottom:1px solid #d4d4d4;box-sizing:border-box"></div>
<div class="t" style='left:447px;top:516.12px;font:400 6.75px/8.78px "Liberation Sans",sans-serif;color:#222;text-align:center;width:36px;overflow:hidden;'>INDUSTRY</div>
<div class="b" style="left:483px;top:514.5px;width:84px;height:11.22px;background:#e3f1fc;border-right:1px solid #bcd3e6;border-bottom:1px solid #bcd3e6;box-sizing:border-box"></div>
<div class="t" style='left:487.6px;top:516.12px;font:400 6.75px/8.78px "Liberation Sans",sans-serif;color:#1c1c1c;'>Industry</div>
<div class="b" style="left:447px;top:525.72px;width:36px;height:11.22px;background:#efefef;border-right:1px solid #cfcfcf;border-bottom:1px solid #d4d4d4;box-sizing:border-box"></div>
<div class="t" style='left:447px;top:527.34px;font:400 6.75px/8.78px "Liberation Sans",sans-serif;color:#222;text-align:center;width:36px;overflow:hidden;'>SCHOOLS</div>
<div class="b" style="left:483px;top:525.72px;width:84px;height:11.22px;background:#e3f1fc;border-right:1px solid #bcd3e6;border-bottom:1px solid #bcd3e6;box-sizing:border-box"></div>
<div class="t" style='left:487.6px;top:527.34px;font:400 6.75px/8.78px "Liberation Sans",sans-serif;color:#1c1c1c;'>Schools</div>
<div class="b" style="left:447px;top:536.94px;width:36px;height:11.22px;background:#efefef;border-right:1px solid #cfcfcf;border-bottom:1px solid #d4d4d4;box-sizing:border-box"></div>
<div class="t" style='left:447px;top:538.56px;font:400 6.75px/8.78px "Liberation Sans",sans-serif;color:#222;text-align:center;width:36px;overflow:hidden;'>RESIDE...</div>
<div class="b" style="left:483px;top:536.94px;width:84px;height:11.22px;background:#e3f1fc;border-right:1px solid #bcd3e6;border-bottom:1px solid #bcd3e6;box-sizing:border-box"></div>
<div class="t" style='left:487.6px;top:538.56px;font:400 6.75px/8.78px "Liberation Sans",sans-serif;color:#1c1c1c;'>Multi-family House</div>
<div class="b" style="left:447px;top:548.16px;width:36px;height:11.22px;background:#efefef;border-right:1px solid #cfcfcf;border-bottom:1px solid #d4d4d4;box-sizing:border-box"></div>
<div class="t" style='left:447px;top:549.78px;font:400 6.75px/8.78px "Liberation Sans",sans-serif;color:#222;text-align:center;width:36px;overflow:hidden;'>ASSEMBLY</div>
<div class="b" style="left:483px;top:548.16px;width:84px;height:11.22px;background:#e3f1fc;border-right:1px solid #bcd3e6;border-bottom:1px solid #bcd3e6;box-sizing:border-box"></div>
<div class="t" style='left:487.6px;top:549.78px;font:400 6.75px/8.78px "Liberation Sans",sans-serif;color:#1c1c1c;'>Assembly</div>
<div class="b" style="left:447px;top:559.38px;width:36px;height:11.22px;background:#efefef;border-right:1px solid #cfcfcf;border-bottom:1px solid #d4d4d4;box-sizing:border-box"></div>
<div class="t" style='left:447px;top:561.0px;font:400 6.75px/8.78px "Liberation Sans",sans-serif;color:#222;text-align:center;width:36px;overflow:hidden;'>WAREH...</div>
<div class="b" style="left:483px;top:559.38px;width:84px;height:11.22px;background:#e3f1fc;border-right:1px solid #bcd3e6;border-bottom:1px solid #bcd3e6;box-sizing:border-box"></div>
<div class="t" style='left:487.6px;top:561.0px;font:400 6.75px/8.78px "Liberation Sans",sans-serif;color:#1c1c1c;'>Warehouse</div>
<div class="b" style="left:447px;top:570.6px;width:36px;height:11.22px;background:#efefef;border-right:1px solid #cfcfcf;border-bottom:1px solid #d4d4d4;box-sizing:border-box"></div>
<div class="t" style='left:447px;top:572.22px;font:400 6.75px/8.78px "Liberation Sans",sans-serif;color:#222;text-align:center;width:36px;overflow:hidden;'>INDOOR...</div>
<div class="b" style="left:483px;top:570.6px;width:84px;height:11.22px;background:#e3f1fc;border-right:1px solid #bcd3e6;border-bottom:1px solid #bcd3e6;box-sizing:border-box"></div>
<div class="t" style='left:487.6px;top:572.22px;font:400 6.75px/8.78px "Liberation Sans",sans-serif;color:#1c1c1c;'>Indoor Swimming Pool</div>
<div class="b" style="left:447px;top:581.82px;width:36px;height:11.22px;background:#efefef;border-right:1px solid #cfcfcf;border-bottom:1px solid #d4d4d4;box-sizing:border-box"></div>
<div class="t" style='left:447px;top:583.44px;font:400 6.75px/8.78px "Liberation Sans",sans-serif;color:#222;text-align:center;width:36px;overflow:hidden;'>SPORTS...</div>
<div class="b" style="left:483px;top:581.82px;width:84px;height:11.22px;background:#e3f1fc;border-right:1px solid #bcd3e6;border-bottom:1px solid #bcd3e6;box-sizing:border-box"></div>
<div class="t" style='left:487.6px;top:583.44px;font:400 6.75px/8.78px "Liberation Sans",sans-serif;color:#1c1c1c;'>Sports Center</div>
<div class="b" style="left:447px;top:593.04px;width:36px;height:11.22px;background:#d6d6d6;border-right:1px solid #cfcfcf;border-bottom:1px solid #d4d4d4;box-sizing:border-box"></div>
<div class="t" style='left:447px;top:594.66px;font:400 6.75px/8.78px "Liberation Sans",sans-serif;color:#777;text-align:center;width:36px;overflow:hidden;'>ADMINIS...</div>
<div class="b" style="left:483px;top:593.04px;width:84px;height:11.22px;background:#b5d8f6;border:1px solid #2f8be6;box-sizing:border-box"></div>
<div class="t" style='left:487.6px;top:594.66px;font:400 6.75px/8.78px "Liberation Sans",sans-serif;color:#567;'>Administration / Office</div>
<div class="b" style="left:447px;top:604.26px;width:36px;height:11.22px;background:#efefef;border-right:1px solid #cfcfcf;border-bottom:1px solid #d4d4d4;box-sizing:border-box"></div>
<div class="t" style='left:447px;top:605.88px;font:400 6.75px/8.78px "Liberation Sans",sans-serif;color:#222;text-align:center;width:36px;overflow:hidden;'>RESIDE...</div>
<div class="b" style="left:483px;top:604.26px;width:84px;height:11.22px;background:#e3f1fc;border-right:1px solid #bcd3e6;border-bottom:1px solid #bcd3e6;box-sizing:border-box"></div>
<div class="t" style='left:487.6px;top:605.88px;font:400 6.75px/8.78px "Liberation Sans",sans-serif;color:#1c1c1c;'>Single-family House</div>
<div class="b" style="left:447px;top:615.48px;width:36px;height:11.22px;background:#efefef;border-right:1px solid #cfcfcf;border-bottom:1px solid #d4d4d4;box-sizing:border-box"></div>
<div class="t" style='left:447px;top:617.1px;font:400 6.75px/8.78px "Liberation Sans",sans-serif;color:#222;text-align:center;width:36px;overflow:hidden;'>RETAIL</div>
<div class="b" style="left:483px;top:615.48px;width:84px;height:11.22px;background:#e3f1fc;border-right:1px solid #bcd3e6;border-bottom:1px solid #bcd3e6;box-sizing:border-box"></div>
<div class="t" style='left:487.6px;top:617.1px;font:400 6.75px/8.78px "Liberation Sans",sans-serif;color:#1c1c1c;'>Retail</div>
<div class="b" style="left:447px;top:626.7px;width:36px;height:11.22px;background:#efefef;border-right:1px solid #cfcfcf;border-bottom:1px solid #d4d4d4;box-sizing:border-box"></div>
<div class="t" style='left:447px;top:628.32px;font:400 6.75px/8.78px "Liberation Sans",sans-serif;color:#222;text-align:center;width:36px;overflow:hidden;'>HOTEL</div>
<div class="b" style="left:483px;top:626.7px;width:84px;height:11.22px;background:#e3f1fc;border-right:1px solid #bcd3e6;border-bottom:1px solid #bcd3e6;box-sizing:border-box"></div>
<div class="t" style='left:487.6px;top:628.32px;font:400 6.75px/8.78px "Liberation Sans",sans-serif;color:#1c1c1c;'>Hotel</div>
<div class="b" style="left:447px;top:503.7px;width:1px;height:134.22px;background:#d0d0d0;"></div>
<div class="b" style="left:447px;top:638.3px;width:120px;height:1.6px;background:#e0e0e0;"></div>
</div></div>
<div class="panel" style="left:788px;top:0;width:377px;height:148px"><div style="position:absolute;left:-788px;top:0;width:1165px;height:644px">
<div class="b" style="left:788px;top:0px;width:377px;height:0.8px;background:#eeeeee;"></div>
<div class="b" style="left:794.9px;top:1px;width:0.8px;height:146.5px;background:#e2e2e2;"></div>
<div class="t" style='left:799.6px;top:2.17px;font:400 14.0px/18.2px "Liberation Sans",sans-serif;color:#555;transform:scale(.25);transform-origin:0 0;'>+ Code</div>
<div class="t" style='left:816.5px;top:2.17px;font:400 14.0px/18.2px "Liberation Sans",sans-serif;color:#555;transform:scale(.25);transform-origin:0 0;'>+ Text</div>
<div class="b" style="left:795.5px;top:9px;width:369.5px;height:0.7px;background:#dddddd;box-shadow:0 .5px 1px rgba(0,0,0,.15)"></div>
<svg class="b" style="left:788px;top:0" width="8" height="148" viewBox="788 0 8 148">
<g stroke="#666" stroke-width=".5"><path d="M789.6 6.8h3M789.6 7.8h3M789.6 8.8h3"/></g>
<circle cx="790.7" cy="18.3" r="1.1" fill="none" stroke="#666" stroke-width=".5"/><path d="M791.5 19.2l1 1" stroke="#666" stroke-width=".5"/>
<path d="M789.4 39.6h1.2l.4.5h1.9v2.6h-3.5z" fill="none" stroke="#555" stroke-width=".55"/>
<path d="M790.4 126.6l-.9.9.9.9M791.8 126.6l.9.9-.9.9" fill="none" stroke="#666" stroke-width=".5"/>
<rect x="789.4" y="134.6" width="3.4" height="2.4" fill="none" stroke="#777" stroke-width=".5"/>
<rect x="789.3" y="142.9" width="3.8" height="3" fill="#333"/>
</svg>
<div class="t" style='left:789px;top:28.07px;font:400 12.8px/16.64px "Liberation Sans",sans-serif;color:#555;transform:scale(.25);transform-origin:0 0;'>{x}</div>
<svg class="b" style="left:797.5px;top:14px" width="3" height="4" viewBox="0 0 3 4"><path d="M.8 1.100L2 2 .8 2.900z" fill="#222"/></svg>
<div class="t" style='left:802.3px;top:12.54px;font:400 4.7px/6.11px "Liberation Sans",sans-serif;color:#2a2a2a;'>See graphs</div>
<svg class="b" style="left:802.2px;top:23.1px" width="6" height="6" viewBox="0 0 6 6"><circle cx="3" cy="3" r="2.3" fill="#333"/><circle cx="3" cy="3" r=".9" fill="#fff"/></svg>
<div class="t" style='left:816.8px;top:25.33px;font:700 13.0px/16.92px "Liberation Sans",sans-serif;color:#1a73e8;transform:scale(.25);transform-origin:0 0;'>Show code</div>
<svg class="b" style="left:803.5px;top:35.5px" width="5" height="4" viewBox="0 0 5 4"><path d="M1 .6h1.6M1 .6v2.8M1 3.400h1.6M3 1.100l1.200.900l-1.200.900z" stroke="#c8c8c8" stroke-width=".45" fill="none"/></svg>
<svg class="b" style="left:1129px;top:2px" width="6" height="6" viewBox="0 0 6 6"><path d="M.8 3.200l1.400 1.400 2.800-3.200" stroke="#2e9a48" stroke-width=".9" fill="none"/></svg>
<div class="t" style='left:1135px;top:2.06px;font:400 10.4px/13.52px "Liberation Sans",sans-serif;color:#3a3a3a;transform:scale(.25);transform-origin:0 0;'>RAM</div>
<div class="t" style='left:1135.4px;top:5.66px;font:400 10.4px/13.52px "Liberation Sans",sans-serif;color:#3a3a3a;transform:scale(.25);transform-origin:0 0;'>Disk</div>
<div class="b" style="left:1141px;top:2.9px;width:4.6px;height:2.3px;background:#fff;border:.3px solid #e4e4e4;border-bottom:.5px solid #9fd4aa;box-sizing:border-box"></div>
<div class="b" style="left:1141px;top:6.1px;width:4.6px;height:2.3px;background:#fff;border:.3px solid #e4e4e4;border-bottom:.5px solid #9fd4aa;box-sizing:border-box"></div>
<svg class="b" style="left:1149px;top:3.6px" width="3" height="3" viewBox="0 0 3 3"><path d="M.4.800h2.200l-1.100 1.400z" fill="#444"/></svg>
<svg class="b" style="left:1158px;top:3.2px" width="5" height="4" viewBox="0 0 5 4"><path d="M.8 2.800l1.600-1.600 1.600 1.600" stroke="#444" stroke-width=".6" fill="none"/></svg>
<svg class="b" style="left:796px;top:40px" width="369" height="108" viewBox="796 40 369 108">
<polyline points="830.5,97.80 987.6,105.60 1142.8,139.40" fill="none" stroke="#f4e04d" stroke-width=".36" opacity=".42"/>
<polyline points="830.5,98.09 987.6,105.76 1142.8,139.42" fill="none" stroke="#f4e04d" stroke-width=".36" opacity=".42"/>
<polyline points="830.5,98.37 987.6,105.92 1142.8,139.45" fill="none" stroke="#d9e86a" stroke-width=".36" opacity=".42"/>
<polyline points="830.5,98.66 987.6,106.09 1142.8,139.47" fill="none" stroke="#d9e86a" stroke-width=".36" opacity=".42"/>
<polyline points="830.5,98.94 987.6,106.25 1142.8,139.50" fill="none" stroke="#a8dd8a" stroke-width=".36" opacity=".42"/>
<polyline points="830.5,99.23 987.6,106.41 1142.8,139.52" fill="none" stroke="#a8dd8a" stroke-width=".36" opacity=".42"/>
<polyline points="830.5,99.51 987.6,106.57 1142.8,139.54" fill="none" stroke="#7fd3b0" stroke-width=".36" opacity=".42"/>
<polyline points="830.5,99.80 987.6,106.73 1142.8,139.57" fill="none" stroke="#7fd3b0" stroke-width=".36" opacity=".42"/>
<polyline points="830.5,100.09 987.6,106.90 1142.8,139.59" fill="none" stroke="#6cc4d8" stroke-width=".36" opacity=".42"/>
<polyline points="830.5,100.37 987.6,107.06 1142.8,139.61" fill="none" stroke="#6cc4d8" stroke-width=".36" opacity=".42"/>
<polyline points="830.5,100.66 987.6,107.22 1142.8,139.64" fill="none" stroke="#7d9be8" stroke-width=".36" opacity=".42"/>
<polyline points="830.5,100.94 987.6,107.38 1142.8,139.66" fill="none" stroke="#7d9be8" stroke-width=".36" opacity=".42"/>
<polyline points="830.5,101.23 987.6,107.54 1142.8,139.69" fill="none" stroke="#9b7fe0" stroke-width=".36" opacity=".42"/>
<polyline points="830.5,101.51 987.6,107.70 1142.8,139.71" fill="none" stroke="#9b7fe0" stroke-width=".36" opacity=".42"/>
<polyline points="830.5,101.80 987.6,107.87 1142.8,139.73" fill="none" stroke="#c46ad8" stroke-width=".36" opacity=".42"/>
<polyline points="830.5,102.09 987.6,108.03 1142.8,139.76" fill="none" stroke="#c46ad8" stroke-width=".36" opacity=".42"/>
<polyline points="830.5,102.37 987.6,108.19 1142.8,139.78" fill="none" stroke="#e86ac0" stroke-width=".36" opacity=".42"/>
<polyline points="830.5,102.66 987.6,108.35 1142.8,139.80" fill="none" stroke="#e86ac0" stroke-width=".36" opacity=".42"/>
<polyline points="830.5,102.94 987.6,108.51 1142.8,139.83" fill="none" stroke="#5b6fd0" stroke-width=".36" opacity=".42"/>
<polyline points="830.5,103.23 987.6,108.68 1142.8,139.85" fill="none" stroke="#5b6fd0" stroke-width=".36" opacity=".42"/>
<polyline points="830.5,103.51 987.6,108.84 1142.8,139.88" fill="none" stroke="#3a3a8a" stroke-width=".36" opacity=".42"/>
<polyline points="830.5,103.80 987.6,109.00 1142.8,139.90" fill="none" stroke="#d86ad0" stroke-width=".36" opacity=".42"/>
<polyline points="987.6,108 1142.8,139.6" fill="none" stroke="#3b3f8f" stroke-width=".5" opacity=".7"/>
<line x1="830.5" y1="58" x2="830.5" y2="140.6" stroke="#c4c8d4" stroke-width=".5"/>
<text transform="translate(830.5 52.2) scale(.25)" font-family="Liberation Sans, sans-serif" font-size="10.4" font-weight="400" fill="#2a3f5f" text-anchor="middle">Capital Cost(€)</text>
<text transform="translate(830.5 56.7) scale(.25)" font-family="Liberation Sans, sans-serif" font-size="10.4" font-weight="400" fill="#2a3f5f" text-anchor="middle">50</text>
<text transform="translate(830.5 145.4) scale(.25)" font-family="Liberation Sans, sans-serif" font-size="10.4" font-weight="400" fill="#2a3f5f" text-anchor="middle">45</text>
<line x1="829.3" y1="58.40" x2="830.5" y2="58.40" stroke="#8890a8" stroke-width=".35"/>
<text transform="translate(828.5 59.3) scale(.25)" font-family="Liberation Sans, sans-serif" font-size="10.4" font-weight="400" fill="#2a3f5f" text-anchor="end">50</text>
<line x1="829.3" y1="74.72" x2="830.5" y2="74.72" stroke="#8890a8" stroke-width=".35"/>
<text transform="translate(828.5 75.62) scale(.25)" font-family="Liberation Sans, sans-serif" font-size="10.4" font-weight="400" fill="#2a3f5f" text-anchor="end">49</text>
<line x1="829.3" y1="91.04" x2="830.5" y2="91.04" stroke="#8890a8" stroke-width=".35"/>
<text transform="translate(828.5 91.94) scale(.25)" font-family="Liberation Sans, sans-serif" font-size="10.4" font-weight="400" fill="#2a3f5f" text-anchor="end">48</text>
<line x1="829.3" y1="107.36" x2="830.5" y2="107.36" stroke="#8890a8" stroke-width=".35"/>
<text transform="translate(828.5 108.26) scale(.25)" font-family="Liberation Sans, sans-serif" font-size="10.4" font-weight="400" fill="#2a3f5f" text-anchor="end">47</text>
<line x1="829.3" y1="123.68" x2="830.5" y2="123.68" stroke="#8890a8" stroke-width=".35"/>
<text transform="translate(828.5 124.58) scale(.25)" font-family="Liberation Sans, sans-serif" font-size="10.4" font-weight="400" fill="#2a3f5f" text-anchor="end">46</text>
<line x1="829.3" y1="140.00" x2="830.5" y2="140.00" stroke="#8890a8" stroke-width=".35"/>
<text transform="translate(828.5 140.9) scale(.25)" font-family="Liberation Sans, sans-serif" font-size="10.4" font-weight="400" fill="#2a3f5f" text-anchor="end">45</text>
<line x1="987.6" y1="58" x2="987.6" y2="140.6" stroke="#c4c8d4" stroke-width=".5"/>
<text transform="translate(987.6 52.2) scale(.25)" font-family="Liberation Sans, sans-serif" font-size="10.4" font-weight="400" fill="#2a3f5f" text-anchor="middle">Net Cost(€/a)</text>
<text transform="translate(987.6 56.7) scale(.25)" font-family="Liberation Sans, sans-serif" font-size="10.4" font-weight="400" fill="#2a3f5f" text-anchor="middle">2.5</text>
<text transform="translate(987.6 145.4) scale(.25)" font-family="Liberation Sans, sans-serif" font-size="10.4" font-weight="400" fill="#2a3f5f" text-anchor="middle">0</text>
<line x1="986.4" y1="58.40" x2="987.6" y2="58.40" stroke="#8890a8" stroke-width=".35"/>
<text transform="translate(985.6 59.3) scale(.25)" font-family="Liberation Sans, sans-serif" font-size="10.4" font-weight="400" fill="#2a3f5f" text-anchor="end">2.5</text>
<line x1="986.4" y1="74.72" x2="987.6" y2="74.72" stroke="#8890a8" stroke-width=".35"/>
<text transform="translate(985.6 75.62) scale(.25)" font-family="Liberation Sans, sans-serif" font-size="10.4" font-weight="400" fill="#2a3f5f" text-anchor="end">2.0</text>
<line x1="986.4" y1="91.04" x2="987.6" y2="91.04" stroke="#8890a8" stroke-width=".35"/>
<text transform="translate(985.6 91.94) scale(.25)" font-family="Liberation Sans, sans-serif" font-size="10.4" font-weight="400" fill="#2a3f5f" text-anchor="end">1.5</text>
<line x1="986.4" y1="107.36" x2="987.6" y2="107.36" stroke="#8890a8" stroke-width=".35"/>
<text transform="translate(985.6 108.26) scale(.25)" font-family="Liberation Sans, sans-serif" font-size="10.4" font-weight="400" fill="#2a3f5f" text-anchor="end">1.0</text>
<line x1="986.4" y1="123.68" x2="987.6" y2="123.68" stroke="#8890a8" stroke-width=".35"/>
<text transform="translate(985.6 124.58) scale(.25)" font-family="Liberation Sans, sans-serif" font-size="10.4" font-weight="400" fill="#2a3f5f" text-anchor="end">0.5</text>
<line x1="986.4" y1="140.00" x2="987.6" y2="140.00" stroke="#8890a8" stroke-width=".35"/>
<text transform="translate(985.6 140.9) scale(.25)" font-family="Liberation Sans, sans-serif" font-size="10.4" font-weight="400" fill="#2a3f5f" text-anchor="end">0</text>
<line x1="1142.8" y1="58" x2="1142.8" y2="140.6" stroke="#c4c8d4" stroke-width=".5"/>
<text transform="translate(1142.8 52.2) scale(.25)" font-family="Liberation Sans, sans-serif" font-size="10.4" font-weight="400" fill="#2a3f5f" text-anchor="middle">CO2 Emissions(tonne/a)</text>
<text transform="translate(1142.8 56.7) scale(.25)" font-family="Liberation Sans, sans-serif" font-size="10.4" font-weight="400" fill="#2a3f5f" text-anchor="middle">8</text>
<text transform="translate(1142.8 145.4) scale(.25)" font-family="Liberation Sans, sans-serif" font-size="10.4" font-weight="400" fill="#2a3f5f" text-anchor="middle">0</text>
<line x1="1141.6" y1="58.40" x2="1142.8" y2="58.40" stroke="#8890a8" stroke-width=".35"/>
<text transform="translate(1140.8 59.3) scale(.25)" font-family="Liberation Sans, sans-serif" font-size="10.4" font-weight="400" fill="#2a3f5f" text-anchor="end">8</text>
<line x1="1141.6" y1="68.60" x2="1142.8" y2="68.60" stroke="#8890a8" stroke-width=".35"/>
<text transform="translate(1140.8 69.5) scale(.25)" font-family="Liberation Sans, sans-serif" font-size="10.4" font-weight="400" fill="#2a3f5f" text-anchor="end">7</text>
<line x1="1141.6" y1="78.80" x2="1142.8" y2="78.80" stroke="#8890a8" stroke-width=".35"/>
<text transform="translate(1140.8 79.7) scale(.25)" font-family="Liberation Sans, sans-serif" font-size="10.4" font-weight="400" fill="#2a3f5f" text-anchor="end">6</text>
<line x1="1141.6" y1="89.00" x2="1142.8" y2="89.00" stroke="#8890a8" stroke-width=".35"/>
<text transform="translate(1140.8 89.9) scale(.25)" font-family="Liberation Sans, sans-serif" font-size="10.4" font-weight="400" fill="#2a3f5f" text-anchor="end">5</text>
<line x1="1141.6" y1="99.20" x2="1142.8" y2="99.20" stroke="#8890a8" stroke-width=".35"/>
<text transform="translate(1140.8 100.1) scale(.25)" font-family="Liberation Sans, sans-serif" font-size="10.4" font-weight="400" fill="#2a3f5f" text-anchor="end">4</text>
<line x1="1141.6" y1="109.40" x2="1142.8" y2="109.40" stroke="#8890a8" stroke-width=".35"/>
<text transform="translate(1140.8 110.3) scale(.25)" font-family="Liberation Sans, sans-serif" font-size="10.4" font-weight="400" fill="#2a3f5f" text-anchor="end">3</text>
<line x1="1141.6" y1="119.60" x2="1142.8" y2="119.60" stroke="#8890a8" stroke-width=".35"/>
<text transform="translate(1140.8 120.5) scale(.25)" font-family="Liberation Sans, sans-serif" font-size="10.4" font-weight="400" fill="#2a3f5f" text-anchor="end">2</text>
<line x1="1141.6" y1="129.80" x2="1142.8" y2="129.80" stroke="#8890a8" stroke-width=".35"/>
<text transform="translate(1140.8 130.7) scale(.25)" font-family="Liberation Sans, sans-serif" font-size="10.4" font-weight="400" fill="#2a3f5f" text-anchor="end">1</text>
<line x1="1141.6" y1="140.00" x2="1142.8" y2="140.00" stroke="#8890a8" stroke-width=".35"/>
<text transform="translate(1140.8 140.9) scale(.25)" font-family="Liberation Sans, sans-serif" font-size="10.4" font-weight="400" fill="#2a3f5f" text-anchor="end">0</text>
</svg>
</div></div>
<div class="panel" style="left:788px;top:165px;width:377px;height:152px"><div style="position:absolute;left:-788px;top:-165px;width:1165px;height:644px">
<div class="b" style="left:798.2px;top:167px;width:0.8px;height:146px;background:#e6e6e6;"></div>
<div class="b" style="left:790px;top:166.6px;width:375px;height:0.6px;background:#f0f0f0;"></div>
<div class="t" style='left:802.6px;top:168.97px;font:400 14.0px/18.2px "Liberation Sans",sans-serif;color:#555;transform:scale(.25);transform-origin:0 0;'>+ Code</div>
<div class="t" style='left:818.6px;top:168.97px;font:400 14.0px/18.2px "Liberation Sans",sans-serif;color:#555;transform:scale(.25);transform-origin:0 0;'>+ Text</div>
<div class="b" style="left:798.6px;top:175px;width:366.4px;height:0.7px;background:#dcdcdc;box-shadow:0 .5px 1px rgba(0,0,0,.15)"></div>
<svg class="b" style="left:789px;top:166px" width="9" height="152" viewBox="789 166 9 152">
<g stroke="#666" stroke-width=".5"><path d="M792.4 172.500h3M792.400 173.500h3M792.400 174.500h3"/></g>
<circle cx="793.7" cy="184" r="1.100" fill="none" stroke="#666" stroke-width=".5"/><path d="M794.5 184.900l1 1" stroke="#666" stroke-width=".5"/>
<path d="M792.300 205.400h1.200l.4.5h1.900v2.600h-3.500z" fill="none" stroke="#555" stroke-width=".55"/>
<path d="M793.2 291.800l-.9.900.9.900M794.600 291.800l.9.900-.9.900" fill="none" stroke="#666" stroke-width=".5"/>
<rect x="792.2" y="300" width="3.400" height="2.400" fill="none" stroke="#777" stroke-width=".5"/>
<rect x="792.1" y="308.100" width="3.800" height="3" fill="#333"/>
</svg>
<div class="t" style='left:792px;top:193.67px;font:400 12.8px/16.64px "Liberation Sans",sans-serif;color:#555;transform:scale(.25);transform-origin:0 0;'>{x}</div>
<svg class="b" style="left:800px;top:178.300px" width="3" height="4" viewBox="0 0 3 4"><path d="M.8 1.100L2 2 .8 2.900z" fill="#222"/></svg>
<div class="t" style='left:805px;top:177.08px;font:400 4.8px/6.24px "Liberation Sans",sans-serif;color:#2a2a2a;'>Add an import and create some sensitivites</div>
<svg class="b" style="left:805.300px;top:187.900px" width="6" height="6" viewBox="0 0 6 6"><circle cx="3" cy="3" r="2.500" fill="#2b2b2b"/><circle cx="3" cy="3" r="1" fill="#fff"/></svg>
<div class="t" style='left:815.5px;top:189.64px;font:400 14.2px/18.48px "Liberation Sans",sans-serif;color:#555;letter-spacing:0.36px;transform:scale(.25);transform-origin:0 0;'><b style="letter-spacing:0;color:#1c1c1c">Run this cell</b> to obtain the energy carriers in your hub.</div>
<div class="t" style='left:815.5px;top:195.64px;font:400 14.2px/18.48px "Liberation Sans",sans-serif;color:#555;letter-spacing:0.36px;transform:scale(.25);transform-origin:0 0;'><b style="letter-spacing:0;color:#1c1c1c">Select the energy carrier to be added as an import</b></div>
<div class="t" style='left:815.5px;top:201.74px;font:400 14.2px/18.48px "Liberation Sans",sans-serif;color:#555;letter-spacing:0.36px;transform:scale(.25);transform-origin:0 0;'><b style="letter-spacing:0;color:#1c1c1c">Select a range of import prices</b> , click <b style="letter-spacing:0;color:#1c1c1c">Add</b> to add to hub and create multiple scenarios</div>
<div class="t" style='left:819.5px;top:210.77px;font:700 12.8px/16.64px "Liberation Sans",sans-serif;color:#1a73e8;transform:scale(.25);transform-origin:0 0;'>Show code</div>
<svg class="b" style="left:805.5px;top:221px" width="5" height="5" viewBox="0 0 5 5"><circle cx="2.5" cy="2.5" r="1.7" fill="none" stroke="#dcdcdc" stroke-width=".5"/></svg>
<div class="b" style="left:814.5px;top:221.2px;width:350.5px;height:19.0px;background:#e7f3e6;"></div>
<div class="b" style="left:814.5px;top:221.2px;width:350.5px;height:4.9px;background:#f1f1f1;"></div>
<div class="b" style="left:814.5px;top:221.2px;width:14.5px;height:19.0px;background:#efefef;"></div>
<div class="b" style="left:814.5px;top:226.1px;width:14.5px;height:4.7px;background:#d9d9d9;"></div>
<div class="b" style="left:865px;top:221.2px;width:36px;height:4.9px;background:#dadada;"></div>
<div class="b" style="left:814.5px;top:225.85px;width:350.5px;height:0.5px;background:#d4d4d4;"></div>
<div class="b" style="left:814.5px;top:230.54999999999998px;width:350.5px;height:0.5px;background:#cfdccf;"></div>
<div class="b" style="left:814.5px;top:235.25px;width:350.5px;height:0.5px;background:#cfdccf;"></div>
<div class="b" style="left:814.5px;top:239.95px;width:350.5px;height:0.5px;background:#cfdccf;"></div>
<div class="b" style="left:828.75px;top:221.2px;width:0.5px;height:19.0px;background:#d2dcd2;"></div>
<div class="b" style="left:864.75px;top:221.2px;width:0.5px;height:19.0px;background:#d2dcd2;"></div>
<div class="b" style="left:900.75px;top:221.2px;width:0.5px;height:19.0px;background:#d2dcd2;"></div>
<div class="b" style="left:936.25px;top:221.2px;width:0.5px;height:19.0px;background:#d2dcd2;"></div>
<div class="b" style="left:971.75px;top:221.2px;width:0.5px;height:19.0px;background:#d2dcd2;"></div>
<div class="b" style="left:1007.75px;top:221.2px;width:0.5px;height:19.0px;background:#d2dcd2;"></div>
<div class="b" style="left:1043.05px;top:221.2px;width:0.5px;height:19.0px;background:#d2dcd2;"></div>
<div class="b" style="left:1078.35px;top:221.2px;width:0.5px;height:19.0px;background:#d2dcd2;"></div>
<div class="b" style="left:1113.75px;top:221.2px;width:0.5px;height:19.0px;background:#d2dcd2;"></div>
<div class="b" style="left:1149.25px;top:221.2px;width:0.5px;height:19.0px;background:#d2dcd2;"></div>
<div class="b" style="left:865px;top:226.1px;width:36px;height:4.7px;background:#eaf3fb;border:.7px solid #2f8be6;box-sizing:border-box"></div>
<div class="t" style='left:816.3px;top:222.41px;font:400 11.6px/15.08px "Liberation Sans",sans-serif;color:#222;transform:scale(.25);transform-origin:0 0;'>key</div>
<div class="t" style='left:830.8px;top:222.41px;font:400 11.6px/15.08px "Liberation Sans",sans-serif;color:#222;transform:scale(.25);transform-origin:0 0;'>energyCarrierGuid</div>
<div class="t" style='left:826.8px;top:223.06px;font:400 7.6px/9.88px "Liberation Sans",sans-serif;color:#bbb;transform:scale(.25);transform-origin:0 0;'>T</div>
<div class="t" style='left:866.8px;top:222.41px;font:400 11.6px/15.08px "Liberation Sans",sans-serif;color:#888;transform:scale(.25);transform-origin:0 0;'>typeKey</div>
<div class="t" style='left:862.8px;top:223.06px;font:400 7.6px/9.88px "Liberation Sans",sans-serif;color:#bbb;transform:scale(.25);transform-origin:0 0;'>T</div>
<div class="t" style='left:902.8px;top:222.41px;font:400 11.6px/15.08px "Liberation Sans",sans-serif;color:#222;transform:scale(.25);transform-origin:0 0;'>typeDisplayName</div>
<div class="t" style='left:898.8px;top:223.06px;font:400 7.6px/9.88px "Liberation Sans",sans-serif;color:#bbb;transform:scale(.25);transform-origin:0 0;'>T</div>
<div class="t" style='left:938.3px;top:222.41px;font:400 11.6px/15.08px "Liberation Sans",sans-serif;color:#222;transform:scale(.25);transform-origin:0 0;'>subtypeKey</div>
<div class="t" style='left:934.3px;top:223.06px;font:400 7.6px/9.88px "Liberation Sans",sans-serif;color:#bbb;transform:scale(.25);transform-origin:0 0;'>T</div>
<div class="t" style='left:973.8px;top:222.41px;font:400 11.6px/15.08px "Liberation Sans",sans-serif;color:#222;transform:scale(.25);transform-origin:0 0;'>subtypeDisplayName</div>
<div class="t" style='left:969.8px;top:223.06px;font:400 7.6px/9.88px "Liberation Sans",sans-serif;color:#bbb;transform:scale(.25);transform-origin:0 0;'>T</div>
<div class="t" style='left:1009.8px;top:222.41px;font:400 11.6px/15.08px "Liberation Sans",sans-serif;color:#222;transform:scale(.25);transform-origin:0 0;'>energyCarrierName</div>
<div class="t" style='left:1005.8px;top:223.06px;font:400 7.6px/9.88px "Liberation Sans",sans-serif;color:#bbb;transform:scale(.25);transform-origin:0 0;'>T</div>
<div class="t" style='left:1045.1px;top:222.41px;font:400 11.6px/15.08px "Liberation Sans",sans-serif;color:#222;transform:scale(.25);transform-origin:0 0;'>colorHexCode</div>
<div class="t" style='left:1041.1px;top:223.06px;font:400 7.6px/9.88px "Liberation Sans",sans-serif;color:#bbb;transform:scale(.25);transform-origin:0 0;'>T</div>
<div class="t" style='left:1080.3999999999999px;top:222.41px;font:400 11.6px/15.08px "Liberation Sans",sans-serif;color:#222;transform:scale(.25);transform-origin:0 0;'>fixedInputShare</div>
<div class="t" style='left:1076.3999999999999px;top:223.06px;font:400 7.6px/9.88px "Liberation Sans",sans-serif;color:#bbb;transform:scale(.25);transform-origin:0 0;'>T</div>
<div class="t" style='left:1115.8px;top:222.41px;font:400 11.6px/15.08px "Liberation Sans",sans-serif;color:#222;transform:scale(.25);transform-origin:0 0;'>outputEfficiency</div>
<div class="t" style='left:1111.8px;top:223.06px;font:400 7.6px/9.88px "Liberation Sans",sans-serif;color:#bbb;transform:scale(.25);transform-origin:0 0;'>T</div>
<div class="t" style='left:1151.3px;top:222.41px;font:400 11.6px/15.08px "Liberation Sans",sans-serif;color:#222;transform:scale(.25);transform-origin:0 0;'>customD</div>
<div class="t" style='left:1147.3px;top:223.06px;font:400 7.6px/9.88px "Liberation Sans",sans-serif;color:#bbb;transform:scale(.25);transform-origin:0 0;'>T</div>
<div class="t" style='left:814.5px;top:227.15px;font:400 12px/15.6px "Liberation Sans",sans-serif;color:#222;text-align:center;width:58.0px;transform:scale(.25);transform-origin:0 0;'>0</div>
<div class="t" style='left:831.2px;top:227.15px;font:400 12px/15.6px "Liberation Sans",sans-serif;color:#1c1c1c;width:132px;overflow:hidden;transform:scale(.25);transform-origin:0 0;'>cde2f432-4a3b-4b4e...</div>
<div class="t" style='left:867.2px;top:227.15px;font:400 12px/15.6px "Liberation Sans",sans-serif;color:#8a9ab0;width:132px;overflow:hidden;transform:scale(.25);transform-origin:0 0;'>ELECTRICAL_ENERGY</div>
<div class="t" style='left:903.2px;top:227.15px;font:400 12px/15.6px "Liberation Sans",sans-serif;color:#1c1c1c;width:130.0px;overflow:hidden;transform:scale(.25);transform-origin:0 0;'>Electrical Energy</div>
<div class="t" style='left:938.7px;top:227.15px;font:400 12px/15.6px "Liberation Sans",sans-serif;color:#1c1c1c;width:130.0px;overflow:hidden;transform:scale(.25);transform-origin:0 0;'>ELECTRICITY</div>
<div class="t" style='left:974.2px;top:227.15px;font:400 12px/15.6px "Liberation Sans",sans-serif;color:#1c1c1c;width:132px;overflow:hidden;transform:scale(.25);transform-origin:0 0;'>Electricity</div>
<div class="t" style='left:1010.2px;top:227.15px;font:400 12px/15.6px "Liberation Sans",sans-serif;color:#1c1c1c;width:129.2px;overflow:hidden;transform:scale(.25);transform-origin:0 0;'>ELECTRICITY@techP...</div>
<div class="t" style='left:1045.5px;top:227.15px;font:400 12px/15.6px "Liberation Sans",sans-serif;color:#1c1c1c;width:129.2px;overflow:hidden;transform:scale(.25);transform-origin:0 0;'>NaN</div>
<div class="t" style='left:1080.8px;top:227.15px;font:400 12px/15.6px "Liberation Sans",sans-serif;color:#1c1c1c;width:129.6px;overflow:hidden;transform:scale(.25);transform-origin:0 0;'>NaN</div>
<div class="t" style='left:1116.2px;top:227.15px;font:400 12px/15.6px "Liberation Sans",sans-serif;color:#1c1c1c;width:130.0px;overflow:hidden;transform:scale(.25);transform-origin:0 0;'>NaN</div>
<div class="t" style='left:1151.7px;top:227.15px;font:400 12px/15.6px "Liberation Sans",sans-serif;color:#1c1c1c;width:130.0px;overflow:hidden;transform:scale(.25);transform-origin:0 0;'>NaN</div>
<div class="t" style='left:814.5px;top:231.85px;font:400 12px/15.6px "Liberation Sans",sans-serif;color:#222;text-align:center;width:58.0px;transform:scale(.25);transform-origin:0 0;'>1</div>
<div class="t" style='left:831.2px;top:231.85px;font:400 12px/15.6px "Liberation Sans",sans-serif;color:#1c1c1c;width:132px;overflow:hidden;transform:scale(.25);transform-origin:0 0;'>2197e83e-dce3-4b41...</div>
<div class="t" style='left:867.2px;top:231.85px;font:400 12px/15.6px "Liberation Sans",sans-serif;color:#1c1c1c;width:132px;overflow:hidden;transform:scale(.25);transform-origin:0 0;'>COOLING_ENERGY</div>
<div class="t" style='left:903.2px;top:231.85px;font:400 12px/15.6px "Liberation Sans",sans-serif;color:#1c1c1c;width:130.0px;overflow:hidden;transform:scale(.25);transform-origin:0 0;'>Cooling Energy</div>
<div class="t" style='left:938.7px;top:231.85px;font:400 12px/15.6px "Liberation Sans",sans-serif;color:#1c1c1c;width:130.0px;overflow:hidden;transform:scale(.25);transform-origin:0 0;'>COOLING_1</div>
<div class="t" style='left:974.2px;top:231.85px;font:400 12px/15.6px "Liberation Sans",sans-serif;color:#1c1c1c;width:132px;overflow:hidden;transform:scale(.25);transform-origin:0 0;'>Cooling -20...-10°C</div>
<div class="t" style='left:1010.2px;top:231.85px;font:400 12px/15.6px "Liberation Sans",sans-serif;color:#1c1c1c;width:129.2px;overflow:hidden;transform:scale(.25);transform-origin:0 0;'>COOLING_1@techPa...</div>
<div class="t" style='left:1045.5px;top:231.85px;font:400 12px/15.6px "Liberation Sans",sans-serif;color:#1c1c1c;width:129.2px;overflow:hidden;transform:scale(.25);transform-origin:0 0;'>NaN</div>
<div class="t" style='left:1080.8px;top:231.85px;font:400 12px/15.6px "Liberation Sans",sans-serif;color:#1c1c1c;width:129.6px;overflow:hidden;transform:scale(.25);transform-origin:0 0;'>NaN</div>
<div class="t" style='left:1116.2px;top:231.85px;font:400 12px/15.6px "Liberation Sans",sans-serif;color:#1c1c1c;width:130.0px;overflow:hidden;transform:scale(.25);transform-origin:0 0;'>NaN</div>
<div class="t" style='left:1151.7px;top:231.85px;font:400 12px/15.6px "Liberation Sans",sans-serif;color:#1c1c1c;width:130.0px;overflow:hidden;transform:scale(.25);transform-origin:0 0;'>NaN</div>
<div class="t" style='left:814.5px;top:236.55px;font:400 12px/15.6px "Liberation Sans",sans-serif;color:#222;text-align:center;width:58.0px;transform:scale(.25);transform-origin:0 0;'>2</div>
<div class="t" style='left:831.2px;top:236.55px;font:400 12px/15.6px "Liberation Sans",sans-serif;color:#1c1c1c;width:132px;overflow:hidden;transform:scale(.25);transform-origin:0 0;'>fa4ca075-ba36-4376...</div>
<div class="t" style='left:867.2px;top:236.55px;font:400 12px/15.6px "Liberation Sans",sans-serif;color:#1c1c1c;width:132px;overflow:hidden;transform:scale(.25);transform-origin:0 0;'>HEATING_ENERGY</div>
<div class="t" style='left:903.2px;top:236.55px;font:400 12px/15.6px "Liberation Sans",sans-serif;color:#1c1c1c;width:130.0px;overflow:hidden;transform:scale(.25);transform-origin:0 0;'>Heating Energy</div>
<div class="t" style='left:938.7px;top:236.55px;font:400 12px/15.6px "Liberation Sans",sans-serif;color:#1c1c1c;width:130.0px;overflow:hidden;transform:scale(.25);transform-origin:0 0;'>HEAT_AMBIENT</div>
<div class="t" style='left:974.2px;top:236.55px;font:400 12px/15.6px "Liberation Sans",sans-serif;color:#1c1c1c;width:132px;overflow:hidden;transform:scale(.25);transform-origin:0 0;'>Heat Ambient</div>
<div class="t" style='left:1010.2px;top:236.55px;font:400 12px/15.6px "Liberation Sans",sans-serif;color:#1c1c1c;width:129.2px;overflow:hidden;transform:scale(.25);transform-origin:0 0;'>HEAT_AMBIENT@tec...</div>
<div class="t" style='left:1045.5px;top:236.55px;font:400 12px/15.6px "Liberation Sans",sans-serif;color:#1c1c1c;width:129.2px;overflow:hidden;transform:scale(.25);transform-origin:0 0;'>NaN</div>
<div class="t" style='left:1080.8px;top:236.55px;font:400 12px/15.6px "Liberation Sans",sans-serif;color:#1c1c1c;width:129.6px;overflow:hidden;transform:scale(.25);transform-origin:0 0;'>NaN</div>
<div class="t" style='left:1116.2px;top:236.55px;font:400 12px/15.6px "Liberation Sans",sans-serif;color:#1c1c1c;width:130.0px;overflow:hidden;transform:scale(.25);transform-origin:0 0;'>NaN</div>
<div class="t" style='left:1151.7px;top:236.55px;font:400 12px/15.6px "Liberation Sans",sans-serif;color:#1c1c1c;width:130.0px;overflow:hidden;transform:scale(.25);transform-origin:0 0;'>NaN</div>
<div class="b" style="left:814.5px;top:275.6px;width:350.5px;height:3.4px;background:#f1f1f1;"></div>
<div class="b" style="left:818px;top:275.8px;width:214px;height:3px;background:#c9c9c9;"></div>
<div class="t" style='left:815px;top:276.16px;font:400 10.4px/13.52px "Liberation Sans",sans-serif;color:#555;transform:scale(.25);transform-origin:0 0;'>◂</div>
<div class="t" style='left:1161.5px;top:276.26px;font:400 10.4px/13.52px "Liberation Sans",sans-serif;color:#555;transform:scale(.25);transform-origin:0 0;'>▸</div>
<div class="t" style='left:815px;top:282.33px;font:400 11.8px/15.36px "Liberation Sans",sans-serif;color:#333;transform:scale(.25);transform-origin:0 0;'>Cost of energy (cents/kWh)</div>
<div class="b" style="left:855.5px;top:283.2px;width:10px;height:0.5px;background:#b0b0b0;"></div>
<div class="b" style="left:867.5px;top:282.5px;width:45px;height:1.9px;background:#2196f3;border-radius:1px"></div>
<div class="b" style="left:865.3px;top:282.3px;width:2.3px;height:2.3px;background:#fff;border-radius:50%;border:.3px solid #ccc;box-sizing:border-box"></div>
<div class="b" style="left:912px;top:282.3px;width:2.3px;height:2.3px;background:#fff;border-radius:50%;border:.3px solid #ccc;box-sizing:border-box"></div>
<div class="t" style='left:919.3px;top:282.33px;font:400 11.8px/15.36px "Liberation Sans",sans-serif;color:#333;transform:scale(.25);transform-origin:0 0;'>10 – 50</div>
<div class="t" style='left:815px;top:289.23px;font:400 11.8px/15.36px "Liberation Sans",sans-serif;color:#333;transform:scale(.25);transform-origin:0 0;'>We will create scenarios for these prices</div>
<div class="b" style="left:872.2px;top:287.6px;width:60.2px;height:6.5px;background:#fff;border:.5px solid #e0e0e0;box-sizing:border-box"></div>
<div class="t" style='left:875.5px;top:289.53px;font:400 11.2px/14.56px "Liberation Sans",sans-serif;color:#b5b5b5;transform:scale(.25);transform-origin:0 0;'>10,20,30,40,50</div>
<div class="b" style="left:814.4px;top:295.2px;width:35.2px;height:6.3px;background:#4caf50;"></div>
<div class="t" style='left:814.4px;top:297.0px;font:700 12px/15.6px "Liberation Sans",sans-serif;color:#fff;text-align:center;width:140.8px;transform:scale(.25);transform-origin:0 0;'>Add</div>
<div class="t" style='left:814.6px;top:302.62px;font:400 11.92px/15.48px "Liberation Mono",monospace;color:#3a3a3a;width:1401.6px;overflow:hidden;transform:scale(.25);transform-origin:0 0;'>{"data":{"scenarioGuid":"esp-c2a7ba00-7c00-45a5-9330-5200","scenarioName":"Reference (Copy)","updated":"2021-07-05T07:19:05.361Z","readyForExecution":false,"masterScenarioGuid":null,"variant":</div>
<div class="t" style='left:814.6px;top:307.01px;font:400 11.92px/15.48px "Liberation Mono",monospace;color:#3a3a3a;width:1401.6px;overflow:hidden;transform:scale(.25);transform-origin:0 0;'>{"data":[{"energyPriceCHFKwh":0.3,"capacityPriceCHFKwYear":null,"capacityPriceCHFKwMonth":null,"fixedOmPriceCHFYear":null,"co2IntensityKgCo2KwhCo2CompensationKgCo2KWh":null,"dynamicCo2Intensit</div>
<div class="t" style='left:814.6px;top:311.31px;font:400 11.92px/15.48px "Liberation Mono",monospace;color:#3a3a3a;width:1401.6px;overflow:hidden;transform:scale(.25);transform-origin:0 0;'>{"data":[{"hubGuid":"esp-d88968bf-de9b-4b78-8b30-d0bb","hubName":"Test Building","updated":"2021-07-05T07:19:05.361Z","created":"2021-07-05T07:19:05.361Z"}],"status":{"code":"ESP_201","desc":"</div>
<svg class="b" style="left:1131.5px;top:167.800px" width="6" height="6" viewBox="0 0 6 6"><path d="M.8 3.200l1.400 1.400 2.800-3.200" stroke="#2e9a48" stroke-width=".9" fill="none"/></svg>
<div class="t" style='left:1137.5px;top:167.86px;font:400 10.4px/13.52px "Liberation Sans",sans-serif;color:#3a3a3a;transform:scale(.25);transform-origin:0 0;'>RAM</div>
<div class="t" style='left:1137.9px;top:171.46px;font:400 10.4px/13.52px "Liberation Sans",sans-serif;color:#3a3a3a;transform:scale(.25);transform-origin:0 0;'>Disk</div>
<div class="b" style="left:1143.5px;top:168.7px;width:4.6px;height:2.3px;background:#fff;border:.3px solid #e4e4e4;border-bottom:.5px solid #9fd4aa;box-sizing:border-box"></div>
<div class="b" style="left:1143.5px;top:171.9px;width:4.6px;height:2.3px;background:#fff;border:.3px solid #e4e4e4;border-bottom:.5px solid #9fd4aa;box-sizing:border-box"></div>
<svg class="b" style="left:1151px;top:169.400px" width="3" height="3" viewBox="0 0 3 3"><path d="M.4.800h2.200l-1.100 1.400z" fill="#444"/></svg>
<svg class="b" style="left:1159px;top:169px" width="5" height="4" viewBox="0 0 5 4"><path d="M.8 2.800l1.600-1.600 1.600 1.600" stroke="#444" stroke-width=".6" fill="none"/></svg>
</div></div>
<div class="panel" style="left:788px;top:326px;width:377px;height:160px"><div style="position:absolute;left:-788px;top:-326px;width:1165px;height:644px">
<div class="b" style="left:797.8px;top:331px;width:0.8px;height:143px;background:#e2e2e2;"></div>
<div class="b" style="left:801.4px;top:336px;width:0.7px;height:138px;background:#cfcfcf;"></div>
<div class="t" style='left:801.8px;top:330.64px;font:400 13.6px/17.68px "Liberation Sans",sans-serif;color:#555;transform:scale(.25);transform-origin:0 0;'>+ Code</div>
<div class="t" style='left:816.8px;top:330.64px;font:400 13.6px/17.68px "Liberation Sans",sans-serif;color:#555;transform:scale(.25);transform-origin:0 0;'>+ Text</div>
<div class="b" style="left:798.2px;top:335.4px;width:366.8px;height:0.7px;background:#dcdcdc;box-shadow:0 .5px 1px rgba(0,0,0,.15)"></div>
<svg class="b" style="left:789px;top:328px" width="9" height="158" viewBox="789 328 9 158">
<g stroke="#666" stroke-width=".5"><path d="M792 333h3M792 334h3M792 335h3"/></g>
<circle cx="793.3" cy="343.800" r="1.100" fill="none" stroke="#666" stroke-width=".5"/><path d="M794.100 344.700l1 1" stroke="#666" stroke-width=".5"/>
<path d="M792 363.400h1.200l.4.5h1.900v2.600h-3.500z" fill="none" stroke="#555" stroke-width=".55"/>
<path d="M792.8 454.400l-.9.900.9.900M794.200 454.400l.9.900-.9.900" fill="none" stroke="#666" stroke-width=".5"/>
<rect x="791.8" y="461.600" width="3.400" height="2.400" fill="none" stroke="#777" stroke-width=".5"/>
<rect x="791.7" y="468.900" width="3.800" height="3" fill="#333"/>
</svg>
<div class="t" style='left:791.6px;top:352.97px;font:400 12.8px/16.64px "Liberation Sans",sans-serif;color:#555;transform:scale(.25);transform-origin:0 0;'>{x}</div>
<svg class="b" style="left:799.6px;top:336.600px" width="3" height="4" viewBox="0 0 3 4"><path d="M.8 1.100L2 2 .8 2.900z" fill="#222"/></svg>
<div class="t" style='left:804px;top:336.18px;font:400 4.5px/5.85px "Liberation Sans",sans-serif;color:#2a2a2a;'>Geneva buildings</div>
<svg class="b" style="left:798.5px;top:345.500px" width="4" height="4" viewBox="0 0 4 4"><path d="M.6 2.200l.9.900 1.700-2" stroke="#5fb36f" stroke-width=".5" fill="none"/></svg>
<div class="b" style="left:802.2px;top:344px;width:8.8px;height:18.6px;background:#e0e0e0;"></div>
<svg class="b" style="left:804px;top:345.700px" width="5" height="5" viewBox="0 0 5 5"><circle cx="2.500" cy="2.500" r="2.200" fill="#2b2b2b"/><path d="M2 1.500L3.600 2.500 2 3.500z" fill="#fff"/></svg>
<div class="t" style='left:813.6px;top:347.62px;font:400 13.68px/17.8px "Liberation Sans",sans-serif;color:#333;letter-spacing:0.18px;transform:scale(.25);transform-origin:0 0;'>Run to (re)load map. On map below, click on the end points of the network and select a non-overlapping area.</div>
<div class="t" style='left:817.3px;top:356.07px;font:700 12.2px/15.84px "Liberation Sans",sans-serif;color:#1a73e8;transform:scale(.25);transform-origin:0 0;'>Show code</div>
<div class="b" style="left:1111.5px;top:335.8px;width:48px;height:5.2px;background:#fff;border-radius:1px;box-shadow:0 .3px 1.200px rgba(0,0,0,.35)"></div>
<svg class="b" style="left:1111px;top:335px" width="50" height="7" viewBox="1111 335 50 7">
<g stroke="#444" stroke-width=".5" fill="none"><path d="M1115.300 340v-3M1114.200 338l1.100-1.100 1.100 1.100M1121.200 337v3M1120.100 339l1.100 1.100 1.100-1.100M1125.800 338.400h2.600"/></g>
<rect x="1131" y="337" width="3.400" height="3" fill="#333"/><rect x="1131.700" y="337.600" width="2" height="1.200" fill="#fff"/>
<circle cx="1138.700" cy="338.500" r="1.700" fill="#333"/><circle cx="1138.700" cy="338.500" r=".6" fill="#fff"/>
<rect x="1143.300" y="337" width="2.600" height="3.200" fill="none" stroke="#444" stroke-width=".5"/>
<rect x="1149.300" y="337" width="2.400" height="3.200" fill="#333"/>
<g fill="#333"><circle cx="1156.300" cy="337.300" r=".4"/><circle cx="1156.300" cy="338.500" r=".4"/><circle cx="1156.300" cy="339.700" r=".4"/></g>
</svg>
<svg class="b" style="left:1128.500px;top:329px" width="6" height="6" viewBox="0 0 6 6"><path d="M.8 3.200l1.400 1.400 2.800-3.200" stroke="#2e9a48" stroke-width=".9" fill="none"/></svg>
<div class="t" style='left:1135.4px;top:332.26px;font:400 10.4px/13.52px "Liberation Sans",sans-serif;color:#3a3a3a;transform:scale(.25);transform-origin:0 0;'>Disk</div>
<div class="b" style="left:1141px;top:332.6px;width:4.6px;height:1.6px;background:#fff;border:.3px solid #e4e4e4;border-bottom:.5px solid #9fd4aa;box-sizing:border-box"></div>
<svg class="b" style="left:1149px;top:330.300px" width="3" height="3" viewBox="0 0 3 3"><path d="M.4.800h2.200l-1.100 1.400z" fill="#444"/></svg>
<svg class="b" style="left:1156px;top:330px" width="5" height="4" viewBox="0 0 5 4"><path d="M.8 2.800l1.600-1.600 1.600 1.600" stroke="#444" stroke-width=".6" fill="none"/></svg>
<div class="b" style="left:1161.8px;top:336px;width:3.2px;height:138px;background:#f4f4f4;"></div>
<div class="b" style="left:1162.2px;top:344px;width:2.6px;height:41px;background:#c9c9c9;"></div>
<svg class="b" style="left:812.3px;top:365px" width="349.400" height="99" viewBox="812.3 365 349.400 99">
<rect x="812" y="365" width="350" height="99" fill="#e9e9e7"/>
<polyline points="877.9,364.9 920,406.5 930,415.3 955.7,437.9 971.8,452.5 988,465.4" fill="none" stroke="#f6f6f4" stroke-width="4.6" stroke-linejoin="round"/>
<polyline points="950.8,364.9 925,408.9 913.4,427" fill="none" stroke="#f6f6f4" stroke-width="4.6" stroke-linejoin="round"/>
<polyline points="965.4,364.9 936.3,417" fill="none" stroke="#f6f6f4" stroke-width="4.6" stroke-linejoin="round"/>
<polyline points="992.6,365 968.9,449.4 965,465" fill="none" stroke="#f6f6f4" stroke-width="4.6" stroke-linejoin="round"/>
<polyline points="1009,364.9 998.5,386.2 989.6,405.6" fill="none" stroke="#f6f6f4" stroke-width="4.6" stroke-linejoin="round"/>
<polyline points="1040,366 1036.5,376.5 1017.1,415.3" fill="none" stroke="#f6f6f4" stroke-width="4.6" stroke-linejoin="round"/>
<polyline points="985.6,380.6 998.5,386.2 1045,405.6 1066,416.1 1101.5,432.3 1135.5,457.3 1148.4,465.4" fill="none" stroke="#f6f6f4" stroke-width="4.6" stroke-linejoin="round"/>
<polyline points="1013,364.9 1045,379 1077.3,393.5 1118.5,411.3 1161.6,442.8" fill="none" stroke="#f6f6f4" stroke-width="4.6" stroke-linejoin="round"/>
<polyline points="989.6,405.6 1045,427.4 1057.1,433.9" fill="none" stroke="#f6f6f4" stroke-width="4.6" stroke-linejoin="round"/>
<polyline points="976.7,434.7 1015.5,452.5 1045,465.4" fill="none" stroke="#f6f6f4" stroke-width="4.6" stroke-linejoin="round"/>
<polyline points="1091.8,364.9 1077.3,393.5 1057.1,433.9 1045,459 1042,465" fill="none" stroke="#f6f6f4" stroke-width="4.6" stroke-linejoin="round"/>
<polyline points="1154.9,364.9 1118.5,411.3 1101.5,432.3 1077.3,465.4" fill="none" stroke="#f6f6f4" stroke-width="4.6" stroke-linejoin="round"/>
<polyline points="1125.8,364.9 1125,400" fill="none" stroke="#f6f6f4" stroke-width="4.6" stroke-linejoin="round"/>
<polyline points="1161.6,399.2 1140.3,424.2" fill="none" stroke="#f6f6f4" stroke-width="4.6" stroke-linejoin="round"/>
<polyline points="1161.6,449.2 1146.8,465.4" fill="none" stroke="#f6f6f4" stroke-width="4.6" stroke-linejoin="round"/>
<polyline points="1124.2,449.2 1112.9,465.4" fill="none" stroke="#f6f6f4" stroke-width="4.6" stroke-linejoin="round"/>
<polyline points="1153.2,364.9 1161.6,371.7" fill="none" stroke="#f6f6f4" stroke-width="4.6" stroke-linejoin="round"/>
<polyline points="913.4,408.8 877.9,455.7 872,465" fill="none" stroke="#f6f6f4" stroke-width="4.6" stroke-linejoin="round"/>
<polyline points="923,431.5 900.5,463.5" fill="none" stroke="#f6f6f4" stroke-width="4.6" stroke-linejoin="round"/>
<polyline points="905.3,421 930,433" fill="none" stroke="#f6f6f4" stroke-width="4.6" stroke-linejoin="round"/>
<polyline points="944.4,429.9 925,457.3 920,465" fill="none" stroke="#f6f6f4" stroke-width="4.6" stroke-linejoin="round"/>
<polyline points="957.3,439.5 941.2,465.4" fill="none" stroke="#f6f6f4" stroke-width="4.6" stroke-linejoin="round"/>
<polyline points="971.8,452.5 963.8,465.4" fill="none" stroke="#f6f6f4" stroke-width="4.6" stroke-linejoin="round"/>
<polyline points="1015.5,452.5 1007.4,465.4" fill="none" stroke="#f6f6f4" stroke-width="4.6" stroke-linejoin="round"/>
<polyline points="925,433 934.7,442.8" fill="none" stroke="#f6f6f4" stroke-width="4.6" stroke-linejoin="round"/>
<polyline points="877.9,364.9 920,406.5 930,415.3 955.7,437.9 971.8,452.5 988,465.4" fill="none" stroke="#f6f6f4" stroke-width="6.6" stroke-linejoin="round"/>
<polyline points="884,364.9 876,377 824,451 815,465" fill="none" stroke="#f6f6f4" stroke-width="22" stroke-linejoin="round"/>
<polygon points="874,394 880,394 872,407 851,433 846,433 856,418" fill="#e6e6e4"/>
<polygon points="1116,416 1130,421 1142,434 1130,447 1110,434" fill="#f4f4f2"/>
<polygon points="1111,418 1129,423 1128,432 1120,431 1117,436 1110,433" fill="#e6e6e4"/>
<polyline points="877.9,364.9 920,406.5 930,415.3 955.7,437.9 971.8,452.5 988,465.4" fill="none" stroke="#ef948e" stroke-width="0.34" opacity="1"/>
<polyline points="950.8,364.9 925,408.9 913.4,427" fill="none" stroke="#ef948e" stroke-width="0.34" opacity="1"/>
<polyline points="965.4,364.9 936.3,417" fill="none" stroke="#ef948e" stroke-width="0.34" opacity="1"/>
<polyline points="992.6,365 968.9,449.4 965,465" fill="none" stroke="#ef948e" stroke-width="0.34" opacity="1"/>
<polyline points="1009,364.9 998.5,386.2 989.6,405.6" fill="none" stroke="#ef948e" stroke-width="0.34" opacity="1"/>
<polyline points="1040,366 1036.5,376.5 1017.1,415.3" fill="none" stroke="#ef948e" stroke-width="0.34" opacity="1"/>
<polyline points="985.6,380.6 998.5,386.2 1045,405.6 1066,416.1 1101.5,432.3 1135.5,457.3 1148.4,465.4" fill="none" stroke="#ef948e" stroke-width="0.34" opacity="1"/>
<polyline points="1013,364.9 1045,379 1077.3,393.5 1118.5,411.3 1161.6,442.8" fill="none" stroke="#ef948e" stroke-width="0.34" opacity="1"/>
<polyline points="989.6,405.6 1045,427.4 1057.1,433.9" fill="none" stroke="#ef948e" stroke-width="0.34" opacity="1"/>
<polyline points="976.7,434.7 1015.5,452.5 1045,465.4" fill="none" stroke="#ef948e" stroke-width="0.34" opacity="1"/>
<polyline points="1091.8,364.9 1077.3,393.5 1057.1,433.9 1045,459 1042,465" fill="none" stroke="#ef948e" stroke-width="0.34" opacity="1"/>
<polyline points="1154.9,364.9 1118.5,411.3 1101.5,432.3 1077.3,465.4" fill="none" stroke="#ef948e" stroke-width="0.34" opacity="1"/>
<polyline points="1125.8,364.9 1125,400" fill="none" stroke="#ef948e" stroke-width="0.34" opacity="1"/>
<polyline points="1161.6,399.2 1140.3,424.2" fill="none" stroke="#ef948e" stroke-width="0.34" opacity="1"/>
<polyline points="1161.6,449.2 1146.8,465.4" fill="none" stroke="#ef948e" stroke-width="0.34" opacity="1"/>
<polyline points="1124.2,449.2 1112.9,465.4" fill="none" stroke="#ef948e" stroke-width="0.34" opacity="1"/>
<polyline points="1153.2,364.9 1161.6,371.7" fill="none" stroke="#ef948e" stroke-width="0.34" opacity="1"/>
<polyline points="913.4,408.8 877.9,455.7 872,465" fill="none" stroke="#ef948e" stroke-width="0.34" opacity="1"/>
<polyline points="923,431.5 900.5,463.5" fill="none" stroke="#ef948e" stroke-width="0.34" opacity="1"/>
<polyline points="905.3,421 930,433" fill="none" stroke="#ef948e" stroke-width="0.34" opacity="1"/>
<polyline points="944.4,429.9 925,457.3 920,465" fill="none" stroke="#ef948e" stroke-width="0.34" opacity="1"/>
<polyline points="957.3,439.5 941.2,465.4" fill="none" stroke="#ef948e" stroke-width="0.34" opacity="1"/>
<polyline points="971.8,452.5 963.8,465.4" fill="none" stroke="#ef948e" stroke-width="0.34" opacity="1"/>
<polyline points="1015.5,452.5 1007.4,465.4" fill="none" stroke="#ef948e" stroke-width="0.34" opacity="1"/>
<polyline points="925,433 934.7,442.8" fill="none" stroke="#ef948e" stroke-width="0.34" opacity="1"/>
<polyline points="897,364.9 888,380 846,433 828,452 817,465" fill="none" stroke="#ef948e" stroke-width="0.34" opacity="1"/>
<polyline points="901,364.9 893,380 870,410 850,434 838,440 826,452" fill="none" stroke="#ef948e" stroke-width="0.34" opacity="1"/>
<polyline points="893,364.9 886,376 872,392 840,432 822,452 812,462" fill="none" stroke="#ef948e" stroke-width="0.34" opacity="1"/>
<polyline points="876,372 858,395 820,444 812,452" fill="none" stroke="#ef948e" stroke-width="0.35" opacity="1"/>
<polyline points="889,388 884,402 866,428 849,450 845,465" fill="none" stroke="#ef948e" stroke-width="0.35" opacity="1"/>
<polyline points="886,406 884,414 872,430 858,448 856,465" fill="none" stroke="#ef948e" stroke-width="0.35" opacity="1"/>
<polyline points="860,424 870,433" fill="none" stroke="#c99" stroke-width="0.4" opacity="1"/>
<polyline points="812,452 832,465" fill="none" stroke="#ef948e" stroke-width="0.35" opacity="1"/>
<polyline points="820,372 850,392 838,405" fill="none" stroke="#d6d6d6" stroke-width="0.3" opacity="1"/>
<polyline points="846,367 880,387" fill="none" stroke="#d6d6d6" stroke-width="0.3" opacity="1"/>
<polyline points="826,398 848,412 840,424" fill="none" stroke="#d6d6d6" stroke-width="0.3" opacity="1"/>
<polyline points="856,382 872,392" fill="none" stroke="#d6d6d6" stroke-width="0.3" opacity="1"/>
<text transform="translate(869 397) rotate(-50) scale(.25)" font-family="Liberation Sans, sans-serif" font-size="11.6" font-weight="400" fill="#8f8f8f" text-anchor="middle">Rue des Deux-Ponts</text>
<text transform="translate(919 375.8) scale(.25)" font-family="Liberation Sans, sans-serif" font-size="11.6" font-weight="400" fill="#8f8f8f" text-anchor="middle">Les Cygnes</text>
<text transform="translate(1040 414) rotate(24) scale(.25)" font-family="Liberation Sans, sans-serif" font-size="11.6" font-weight="400" fill="#8f8f8f" text-anchor="middle">Rue Dancet</text>
<text transform="translate(1085 420) rotate(24) scale(.25)" font-family="Liberation Sans, sans-serif" font-size="11.6" font-weight="400" fill="#8f8f8f" text-anchor="middle">Rue du Vieux-Billard</text>
<text transform="translate(1139 428) rotate(24) scale(.25)" font-family="Liberation Sans, sans-serif" font-size="11.6" font-weight="400" fill="#8f8f8f" text-anchor="middle">Rue des Voisins</text>
<text transform="translate(1154 405) scale(.25)" font-family="Liberation Sans, sans-serif" font-size="11.6" font-weight="400" fill="#8f8f8f" text-anchor="middle">Carrefour de</text>
<text transform="translate(1154 408) scale(.25)" font-family="Liberation Sans, sans-serif" font-size="11.6" font-weight="400" fill="#8f8f8f" text-anchor="middle">Plain-Palais</text>
<text transform="translate(960 436) rotate(-52) scale(.25)" font-family="Liberation Sans, sans-serif" font-size="11.6" font-weight="400" fill="#8f8f8f" text-anchor="middle">Rue des Maraîchers</text>
<text transform="translate(1003 448) rotate(-52) scale(.25)" font-family="Liberation Sans, sans-serif" font-size="11.6" font-weight="400" fill="#8f8f8f" text-anchor="middle">Rue des Bains</text>
<polyline points="984.3,386.5 980.8,385.8 955.2,436.8" fill="none" stroke="#4a68ee" stroke-width="0.9" stroke-linejoin="round"/>
<polyline points="979.8,386.5 954.5,436.3" fill="none" stroke="#4a68ee" stroke-width="0.5" stroke-linejoin="round"/>
<polyline points="959.1,383.7 950,392.8 948.6,398.4 943.7,403.3" fill="none" stroke="#4a68ee" stroke-width="0.55" stroke-linejoin="round"/>
<polyline points="948.6,401.9 936,421.5 955.2,436.8 957,438.9 968.2,447.3 988.5,404.7 975.9,399.1" fill="none" stroke="#4a68ee" stroke-width="0.55" stroke-linejoin="round"/>
<circle cx="959.5" cy="384.0" r="1" fill="#5e1a86"/>
<circle cx="957.0" cy="388.4" r="1" fill="#5e1a86"/>
<circle cx="949.1" cy="389.8" r="1" fill="#5e1a86"/>
<circle cx="953.5" cy="394.6" r="1" fill="#5e1a86"/>
<circle cx="948.9" cy="403.0" r="1" fill="#5e1a86"/>
<circle cx="978.4" cy="385.4" r="1" fill="#5e1a86"/>
<circle cx="975.6" cy="391.0" r="1" fill="#5e1a86"/>
<circle cx="973.2" cy="395.9" r="1" fill="#5e1a86"/>
<circle cx="970.9" cy="400.8" r="1" fill="#5e1a86"/>
<circle cx="976.4" cy="404.7" r="1" fill="#5e1a86"/>
<circle cx="968.8" cy="405.3" r="1" fill="#5e1a86"/>
<circle cx="966.0" cy="411.1" r="1" fill="#5e1a86"/>
<circle cx="973.5" cy="411.1" r="1" fill="#5e1a86"/>
<circle cx="962.1" cy="419.0" r="1" fill="#5e1a86"/>
<circle cx="969.5" cy="419.2" r="1" fill="#5e1a86"/>
<circle cx="966.8" cy="424.5" r="1" fill="#5e1a86"/>
<circle cx="977.7" cy="423.1" r="1" fill="#5e1a86"/>
<circle cx="975.9" cy="428.9" r="1" fill="#5e1a86"/>
<circle cx="957.7" cy="428.2" r="1" fill="#5e1a86"/>
<circle cx="946.8" cy="427.1" r="1" fill="#5e1a86"/>
<circle cx="951.7" cy="430.8" r="1" fill="#5e1a86"/>
<circle cx="942.4" cy="402.3" r=".9" fill="#777"/><path d="M941.9 402.8L942.4 404.0L942.9 402.8z" fill="#777"/>
<circle cx="984.7" cy="387.2" r=".9" fill="#777"/><path d="M984.2 387.7L984.7 388.9L985.2 387.7z" fill="#777"/>
<rect x="972" y="365" width="19" height="4.400" rx=".8" fill="#f21d1d"/>
<text transform="translate(981.5 368.1) scale(.25)" font-family="Liberation Sans, sans-serif" font-size="9.6" font-weight="400" fill="#fff" text-anchor="middle">2288829.26 m²</text>
<circle cx="1157.6" cy="459.300" r="1.500" fill="#222"/><rect x="814.5" y="456.800" width="4" height="4" rx=".8" fill="#dcdcdc"/>
</svg>
<div class="t" style='left:814.3px;top:466.3px;font:400 11.4px/14.84px "Liberation Sans",sans-serif;color:#333;transform:scale(.25);transform-origin:0 0;'>Cost per km</div>
<div class="b" style="left:833px;top:467.3px;width:28px;height:0.5px;background:#b5b5b5;"></div>
<div class="b" style="left:846.2px;top:466.4px;width:2.2px;height:2.2px;background:#fff;border-radius:50%;border:.3px solid #bbb"></div>
<div class="t" style='left:866px;top:466.3px;font:400 11.4px/14.84px "Liberation Sans",sans-serif;color:#333;transform:scale(.25);transform-origin:0 0;'>20000</div>
<div class="t" style='left:879.8px;top:466.3px;font:400 11.4px/14.84px "Liberation Sans",sans-serif;color:#333;transform:scale(.25);transform-origin:0 0;'>Calculated network length (m):</div>
<div class="b" style="left:919.4px;top:464.6px;width:26px;height:6px;background:#fff;border:.5px solid #e2e2e2;box-sizing:border-box"></div>
<div class="t" style='left:921.5px;top:466.4px;font:400 10.8px/14.04px "Liberation Sans",sans-serif;color:#b0b0b0;transform:scale(.25);transform-origin:0 0;'>1028.006</div>
<div class="b" style="left:801.4px;top:473.4px;width:360px;height:0.8px;background:#c9c9c9;box-shadow:0 .5px 1px rgba(0,0,0,.2)"></div>
<div class="b" style="left:790px;top:477.5px;width:0px;height:0px;background:#fff;"></div>
<svg class="b" style="left:947.5px;top:476px" width="5" height="4" viewBox="0 0 5 4"><path d="M.8 2.200l1 1 2-2.400" stroke="#5fb36f" stroke-width=".5" fill="none"/></svg>
<div class="t" style='left:955px;top:476.67px;font:400 11.6px/15.08px "Liberation Sans",sans-serif;color:#444;transform:scale(.25);transform-origin:0 0;'>53s</div>
<div class="t" style='left:962px;top:476.67px;font:400 11.6px/15.08px "Liberation Sans",sans-serif;color:#444;transform:scale(.25);transform-origin:0 0;'>completed at 11:04 AM</div>
<div class="b" style="left:1157px;top:477.2px;width:1.6px;height:1.6px;background:#2e9a48;border-radius:50%"></div>
<div class="t" style='left:1161.5px;top:476.6px;font:400 12px/15.6px "Liberation Sans",sans-serif;color:#444;transform:scale(.25);transform-origin:0 0;'>×</div>
</div></div>
<div class="panel" style="left:788px;top:495.3px;width:377px;height:148.700px"><div style="position:absolute;left:-788px;top:-495.3px;width:1165px;height:644px">
<svg class="b" style="left:791px;top:494.5px" width="12" height="7" viewBox="791 494.5 12 7">
<path d="M792.800 494.500V497.400a1.700 1.700 0 0 0 3.400 0V494.500" stroke="#f9ab00" stroke-width="1.300" fill="none"/><path d="M792.800 494.500V497.400a1.700 1.700 0 0 0 1.700 1.700" stroke="#e8710a" stroke-width="1.300" fill="none"/>
<path d="M797.700 494.500V497.400a1.700 1.700 0 0 0 3.400 0V494.500" stroke="#e8710a" stroke-width="1.300" fill="none"/><path d="M799.400 499.100a1.700 1.700 0 0 0 1.700-1.700V494.500" stroke="#f9ab00" stroke-width="1.300" fill="none"/>
</svg>
<div class="b" style="left:806.5px;top:495px;width:2.2px;height:1.6px;background:#4285f4;"></div>
<div class="t" style='left:809.5px;top:492.4px;font:400 4.3px/5.59px "Liberation Sans",sans-serif;color:#333;'>Building_Portfolio_Optimization.ipynb</div>
<div class="t" style='left:805px;top:499.78px;font:400 14.6px/19.0px "Liberation Sans",sans-serif;color:#333;transform:scale(.25);transform-origin:0 0;'>File&nbsp; Edit&nbsp; View&nbsp; Insert&nbsp; Runtime&nbsp; Tools&nbsp; Help&nbsp; <span style="color:#888;text-decoration:underline">Last edited on July 1</span></div>
<div class="b" style="left:789px;top:505.6px;width:376px;height:0.6px;background:#f4f4f4;"></div>
<div class="b" style="left:1110px;top:495.4px;width:3.6px;height:2.8px;background:#333;"></div>
<div class="t" style='left:1115.6px;top:495.5px;font:400 12px/15.6px "Liberation Sans",sans-serif;color:#333;transform:scale(.25);transform-origin:0 0;'>Comment</div>
<svg class="b" style="left:1139.5px;top:495.200px" width="5" height="4" viewBox="0 0 5 4"><circle cx="1.700" cy="1.200" r=".8" fill="#333"/><circle cx="3.500" cy="1.400" r=".6" fill="#333"/><path d="M.3 3.400a1.400 1.400 0 0 1 2.800 0zM3 3.400a1 1 0 0 1 1.800 0z" fill="#333"/></svg>
<div class="t" style='left:1145.4px;top:495.5px;font:400 12px/15.6px "Liberation Sans",sans-serif;color:#333;transform:scale(.25);transform-origin:0 0;'>Share</div>
<svg class="b" style="left:1157.600px;top:495px" width="4" height="4" viewBox="0 0 4 4"><circle cx="2" cy="2" r="1.600" fill="#333"/><circle cx="2" cy="2" r=".6" fill="#fff"/></svg>
<div class="b" style="left:1163.6px;top:494.5px;width:2px;height:4.5px;background:#ef6c00;border-radius:2px 0 0 2px"></div>
<div class="b" style="left:790px;top:508.5px;width:0.9px;height:6.5px;background:#f9ab00;"></div>
<svg class="b" style="left:789px;top:506px" width="10" height="138" viewBox="789 506 10 138">
<g stroke="#e8710a" stroke-width=".5"><path d="M792.400 510.800h3M792.400 511.800h3M792.400 512.800h3"/></g>
<circle cx="793.500" cy="521.600" r="1.100" fill="none" stroke="#666" stroke-width=".5"/><path d="M794.300 522.500l1 1" stroke="#666" stroke-width=".5"/>
<path d="M792.100 541.700h1.200l.4.500h1.900v2.600h-3.500z" fill="none" stroke="#555" stroke-width=".55"/>
<path d="M793 636.400l-.9.900.9.900M794.400 636.400l.9.900-.9.900" fill="none" stroke="#666" stroke-width=".5"/>
</svg>
<div class="t" style='left:791.7px;top:531.07px;font:400 12.8px/16.64px "Liberation Sans",sans-serif;color:#555;transform:scale(.25);transform-origin:0 0;'>{x}</div>
<div class="t" style='left:799.5px;top:510.05px;font:400 14.8px/19.24px "Liberation Sans",sans-serif;color:#222;transform:scale(.25);transform-origin:0 0;'>Table of contents</div>
<svg class="b" style="left:851.500px;top:509.500px" width="12" height="5" viewBox="0 0 12 5"><rect x=".6" y="1" width="3.600" height="3" rx=".5" fill="none" stroke="#444" stroke-width=".55"/><path d="M3 .4h1.800v1.600" stroke="#444" stroke-width=".5" fill="none"/><path d="M7.600 1l3 3M10.600 1l-3 3" stroke="#444" stroke-width=".6"/></svg>
<div class="b" style="left:863.3px;top:515px;width:1.7px;height:43px;background:#c4c4c4;"></div>
<div class="b" style="left:866px;top:506px;width:0.6px;height:138px;background:#e4e4e4;"></div>
<div class="b" style="left:799.3px;top:519px;width:1px;height:10.5px;background:#fbd35a;"></div>
<div class="t" style='left:802.7px;top:520.47px;font:700 12.8px/16.64px "Liberation Sans",sans-serif;color:#222;transform:scale(.25);transform-origin:0 0;'>Building Portfolio Optimization with</div>
<div class="t" style='left:802.7px;top:524.57px;font:700 12.8px/16.64px "Liberation Sans",sans-serif;color:#222;transform:scale(.25);transform-origin:0 0;'>Symphony</div>
<div class="t" style='left:802.7px;top:533.17px;font:400 12.8px/16.64px "Liberation Sans",sans-serif;color:#555;transform:scale(.25);transform-origin:0 0;'>Setting up the run environment</div>
<div class="t" style='left:808.2px;top:541.47px;font:400 12.8px/16.64px "Liberation Sans",sans-serif;color:#666;transform:scale(.25);transform-origin:0 0;'>Login and create a new Symphony</div>
<div class="t" style='left:808.2px;top:545.47px;font:400 12.8px/16.64px "Liberation Sans",sans-serif;color:#666;transform:scale(.25);transform-origin:0 0;'>Project</div>
<div class="t" style='left:808.2px;top:553.87px;font:400 12.8px/16.64px "Liberation Sans",sans-serif;color:#666;transform:scale(.25);transform-origin:0 0;'>Create a New Analysis and a first</div>
<div class="t" style='left:808.2px;top:557.97px;font:400 12.8px/16.64px "Liberation Sans",sans-serif;color:#666;transform:scale(.25);transform-origin:0 0;'>Scenario</div>
<div class="t" style='left:808.2px;top:566.47px;font:400 12.8px/16.64px "Liberation Sans",sans-serif;color:#666;transform:scale(.25);transform-origin:0 0;'>Create a new Hub</div>
<div class="t" style='left:808.2px;top:574.87px;font:400 12.8px/16.64px "Liberation Sans",sans-serif;color:#666;transform:scale(.25);transform-origin:0 0;'>Search address and assign to</div>
<div class="t" style='left:808.2px;top:578.97px;font:400 12.8px/16.64px "Liberation Sans",sans-serif;color:#666;transform:scale(.25);transform-origin:0 0;'>newly created hub</div>
<div class="t" style='left:802.7px;top:587.17px;font:400 12.8px/16.64px "Liberation Sans",sans-serif;color:#555;transform:scale(.25);transform-origin:0 0;'>Setting up technologies</div>
<div class="t" style='left:808.2px;top:596.07px;font:400 12.8px/16.64px "Liberation Sans",sans-serif;color:#666;transform:scale(.25);transform-origin:0 0;'>Get list of technology packages</div>
<div class="t" style='left:808.2px;top:604.47px;font:400 12.8px/16.64px "Liberation Sans",sans-serif;color:#666;transform:scale(.25);transform-origin:0 0;'>View and add a technology</div>
<div class="t" style='left:808.2px;top:608.57px;font:400 12.8px/16.64px "Liberation Sans",sans-serif;color:#666;transform:scale(.25);transform-origin:0 0;'>package to a hub</div>
<div class="t" style='left:802.7px;top:616.87px;font:400 12.8px/16.64px "Liberation Sans",sans-serif;color:#555;transform:scale(.25);transform-origin:0 0;'>Setting up demand</div>
<div class="t" style='left:808.2px;top:625.17px;font:400 12.8px/16.64px "Liberation Sans",sans-serif;color:#666;transform:scale(.25);transform-origin:0 0;'>OPTIONAL: GET to query all the</div>
<div class="t" style='left:808.2px;top:629.27px;font:400 12.8px/16.64px "Liberation Sans",sans-serif;color:#666;transform:scale(.25);transform-origin:0 0;'>energy carriers</div>
<div class="t" style='left:808.2px;top:637.67px;font:400 12.8px/16.64px "Liberation Sans",sans-serif;color:#666;transform:scale(.25);transform-origin:0 0;'>Method 1: Uploading a demand</div>
<div class="t" style='left:808.2px;top:641.77px;font:400 12.8px/16.64px "Liberation Sans",sans-serif;color:#666;transform:scale(.25);transform-origin:0 0;'>series excel</div>
<div class="t" style='left:870.6px;top:507.34px;font:400 13.6px/17.68px "Liberation Sans",sans-serif;color:#555;transform:scale(.25);transform-origin:0 0;'>+ Code</div>
<div class="t" style='left:885.6px;top:507.34px;font:400 13.6px/17.68px "Liberation Sans",sans-serif;color:#555;transform:scale(.25);transform-origin:0 0;'>+ Text</div>
<div class="t" style='left:1144.4px;top:507.41px;font:400 13.2px/17.16px "Liberation Sans",sans-serif;color:#444;transform:scale(.25);transform-origin:0 0;'>Connect</div>
<svg class="b" style="left:1159px;top:507.800px" width="3" height="3" viewBox="0 0 3 3"><path d="M.4.800h2.200l-1.100 1.400z" fill="#444"/></svg>
<div class="b" style="left:866.5px;top:513.3px;width:298.5px;height:0.7px;background:#dcdcdc;box-shadow:0 .5px 1px rgba(0,0,0,.15)"></div>
<svg class="b" style="left:868px;top:516.300px" width="3" height="4" viewBox="0 0 3 4"><path d="M.8 1.100L2 2 .8 2.900z" fill="#222"/></svg>
<div class="t" style='left:873px;top:515.28px;font:400 4.49px/5.84px "Liberation Sans",sans-serif;color:#2a2a2a;'>GET demand parameters and guid based on demand and building Type</div>
<svg class="b" style="left:872.3px;top:526.100px" width="5" height="5" viewBox="0 0 5 5"><circle cx="2.500" cy="2.500" r="2.200" fill="#2b2b2b"/><circle cx="2.500" cy="2.500" r=".9" fill="#fff"/></svg>
<div class="t" style='left:883px;top:527.72px;font:400 13.68px/17.8px "Liberation Sans",sans-serif;color:#333;letter-spacing:0.32px;transform:scale(.25);transform-origin:0 0;'>From the options above, choose a demand type and a building type, to see the parameter of each build year</div>
<div class="t" style='left:886.3px;top:537.17px;font:700 12.2px/15.84px "Liberation Mono",monospace;color:#222;transform:scale(.25);transform-origin:0 0;'>demandType:</div>
<div class="t" style='left:912.3px;top:536.9px;font:400 13.2px/17.16px "Liberation Sans",sans-serif;color:#444;transform:scale(.25);transform-origin:0 0;'>SPACE_HEATING</div>
<div class="b" style="left:912px;top:541px;width:185px;height:0.5px;background:#c4c4c4;"></div>
<div class="t" style='left:886.3px;top:547.47px;font:700 12.2px/15.84px "Liberation Mono",monospace;color:#222;transform:scale(.25);transform-origin:0 0;'>buildingType:</div>
<div class="t" style='left:915.8px;top:547.2px;font:400 13.2px/17.16px "Liberation Sans",sans-serif;color:#444;transform:scale(.25);transform-origin:0 0;'>RESIDENCE_MFH</div>
<div class="b" style="left:915.5px;top:551.4px;width:181.5px;height:0.5px;background:#c4c4c4;"></div>
<div class="b" style="left:1098px;top:538px;width:0.8px;height:0.8px;background:#ccc;"></div>
<div class="b" style="left:1098px;top:548.3px;width:0.8px;height:0.8px;background:#ccc;"></div>
<div class="t" style='left:886.6px;top:558.03px;font:700 12.4px/16.12px "Liberation Sans",sans-serif;color:#1a73e8;transform:scale(.25);transform-origin:0 0;'>Show code</div>
<svg class="b" style="left:873px;top:566.300px" width="5" height="5" viewBox="0 0 5 5"><circle cx="2.500" cy="2.500" r="1.600" fill="none" stroke="#dcdcdc" stroke-width=".5"/></svg>
<div class="t" style='left:881px;top:567.33px;font:400 11.8px/15.36px "Liberation Mono",monospace;color:#333;width:856px;overflow:hidden;transform:scale(.25);transform-origin:0 0;'>{"data":{"buildingType":"Multi-family House","minimumProfileValue":0.0000,"maximumProfileValue":0.0007,"averageProfileValue":0.0001,</div>
<div class="t" style='left:825.5px;top:572.79px;font:700 10.8px/14.04px "Liberation Mono",monospace;color:#222;text-align:right;width:480px;transform:scale(.25);transform-origin:0 0;'>buildingAgeStrStandard</div>
<div class="t" style='left:879.8px;top:572.79px;font:700 10.8px/14.04px "Liberation Mono",monospace;color:#222;text-align:right;width:480px;transform:scale(.25);transform-origin:0 0;'>specificEnergyDemandValueKWhM2</div>
<div class="t" style='left:911px;top:572.79px;font:700 10.8px/14.04px "Liberation Mono",monospace;color:#222;text-align:right;width:480px;transform:scale(.25);transform-origin:0 0;'>displayValue</div>
<div class="t" style='left:954px;top:572.79px;font:700 10.8px/14.04px "Liberation Mono",monospace;color:#222;text-align:right;width:480px;transform:scale(.25);transform-origin:0 0;'>energyDemandMetadataGuid</div>
<div class="t" style='left:975.5999999999999px;top:572.79px;font:700 10.8px/14.04px "Liberation Mono",monospace;color:#222;text-align:right;width:480px;transform:scale(.25);transform-origin:0 0;'>dbOrganiza</div>
<div class="b" style="left:881.5px;top:578.15px;width:215.5px;height:14.5px;background:#f5f5f5;"></div>
<div class="t" style='left:884.3px;top:584.06px;font:700 11.6px/15.08px "Liberation Sans",sans-serif;color:#222;transform:scale(.25);transform-origin:0 0;'>0</div>
<div class="t" style='left:900px;top:584.06px;font:400 11.6px/15.08px "Liberation Sans",sans-serif;color:#333;text-align:center;width:240px;transform:scale(.25);transform-origin:0 0;'>AGE_UNDER_1970</div>
<div class="t" style='left:961.6px;top:584.06px;font:400 11.6px/15.08px "Liberation Sans",sans-serif;color:#333;text-align:right;width:160px;transform:scale(.25);transform-origin:0 0;'>215.00</div>
<div class="t" style='left:991px;top:580.59px;font:400 10.8px/14.04px "Liberation Sans",sans-serif;color:#333;text-align:right;width:160px;transform:scale(.25);transform-origin:0 0;'>&lt;1970</div>
<div class="t" style='left:991px;top:584.19px;font:400 10.8px/14.04px "Liberation Sans",sans-serif;color:#333;text-align:right;width:160px;transform:scale(.25);transform-origin:0 0;'>(215.00kWh/m2</div>
<div class="t" style='left:991px;top:587.79px;font:400 10.8px/14.04px "Liberation Sans",sans-serif;color:#333;text-align:right;width:160px;transform:scale(.25);transform-origin:0 0;'>per year)</div>
<div class="t" style='left:1027.6px;top:582.39px;font:400 10.8px/14.04px "Liberation Sans",sans-serif;color:#333;text-align:center;width:240px;transform:scale(.25);transform-origin:0 0;'>esp-a3a3f62f-801f-5170-</div>
<div class="t" style='left:1027.6px;top:586.0px;font:400 10.8px/14.04px "Liberation Sans",sans-serif;color:#333;text-align:center;width:240px;transform:scale(.25);transform-origin:0 0;'>9835-eec28a9e569d</div>
<div class="t" style='left:884.3px;top:598.56px;font:700 11.6px/15.08px "Liberation Sans",sans-serif;color:#222;transform:scale(.25);transform-origin:0 0;'>1</div>
<div class="t" style='left:900px;top:598.56px;font:400 11.6px/15.08px "Liberation Sans",sans-serif;color:#333;text-align:center;width:240px;transform:scale(.25);transform-origin:0 0;'>AGE_1970_1980</div>
<div class="t" style='left:961.6px;top:598.56px;font:400 11.6px/15.08px "Liberation Sans",sans-serif;color:#333;text-align:right;width:160px;transform:scale(.25);transform-origin:0 0;'>190.00</div>
<div class="t" style='left:991px;top:595.09px;font:400 10.8px/14.04px "Liberation Sans",sans-serif;color:#333;text-align:right;width:160px;transform:scale(.25);transform-origin:0 0;'>1970-1980</div>
<div class="t" style='left:991px;top:598.69px;font:400 10.8px/14.04px "Liberation Sans",sans-serif;color:#333;text-align:right;width:160px;transform:scale(.25);transform-origin:0 0;'>(190.00kWh/m2</div>
<div class="t" style='left:991px;top:602.29px;font:400 10.8px/14.04px "Liberation Sans",sans-serif;color:#333;text-align:right;width:160px;transform:scale(.25);transform-origin:0 0;'>per year)</div>
<div class="t" style='left:1027.6px;top:596.89px;font:400 10.8px/14.04px "Liberation Sans",sans-serif;color:#333;text-align:center;width:240px;transform:scale(.25);transform-origin:0 0;'>esp-0ec0dbab-6b32-5a16-</div>
<div class="t" style='left:1027.6px;top:600.5px;font:400 10.8px/14.04px "Liberation Sans",sans-serif;color:#333;text-align:center;width:240px;transform:scale(.25);transform-origin:0 0;'>8243-b063d0ddd758</div>
<div class="b" style="left:881.5px;top:607.15px;width:215.5px;height:14.5px;background:#f5f5f5;"></div>
<div class="t" style='left:884.3px;top:613.06px;font:700 11.6px/15.08px "Liberation Sans",sans-serif;color:#222;transform:scale(.25);transform-origin:0 0;'>2</div>
<div class="t" style='left:900px;top:613.06px;font:400 11.6px/15.08px "Liberation Sans",sans-serif;color:#333;text-align:center;width:240px;transform:scale(.25);transform-origin:0 0;'>AGE_1980_1995</div>
<div class="t" style='left:961.6px;top:613.06px;font:400 11.6px/15.08px "Liberation Sans",sans-serif;color:#333;text-align:right;width:160px;transform:scale(.25);transform-origin:0 0;'>135.00</div>
<div class="t" style='left:991px;top:609.59px;font:400 10.8px/14.04px "Liberation Sans",sans-serif;color:#333;text-align:right;width:160px;transform:scale(.25);transform-origin:0 0;'>1980-1995</div>
<div class="t" style='left:991px;top:613.19px;font:400 10.8px/14.04px "Liberation Sans",sans-serif;color:#333;text-align:right;width:160px;transform:scale(.25);transform-origin:0 0;'>(135.00kWh/m2</div>
<div class="t" style='left:991px;top:616.79px;font:400 10.8px/14.04px "Liberation Sans",sans-serif;color:#333;text-align:right;width:160px;transform:scale(.25);transform-origin:0 0;'>per year)</div>
<div class="t" style='left:1027.6px;top:611.39px;font:400 10.8px/14.04px "Liberation Sans",sans-serif;color:#333;text-align:center;width:240px;transform:scale(.25);transform-origin:0 0;'>esp-2dd82c9f-f850-5452-</div>
<div class="t" style='left:1027.6px;top:615.0px;font:400 10.8px/14.04px "Liberation Sans",sans-serif;color:#333;text-align:center;width:240px;transform:scale(.25);transform-origin:0 0;'>af3a-4048c2398e5a</div>
<div class="t" style='left:884.3px;top:627.56px;font:700 11.6px/15.08px "Liberation Sans",sans-serif;color:#222;transform:scale(.25);transform-origin:0 0;'>3</div>
<div class="t" style='left:900px;top:627.56px;font:400 11.6px/15.08px "Liberation Sans",sans-serif;color:#333;text-align:center;width:240px;transform:scale(.25);transform-origin:0 0;'>AGE_1995_2005</div>
<div class="t" style='left:961.6px;top:627.56px;font:400 11.6px/15.08px "Liberation Sans",sans-serif;color:#333;text-align:right;width:160px;transform:scale(.25);transform-origin:0 0;'>90.00</div>
<div class="t" style='left:991px;top:624.09px;font:400 10.8px/14.04px "Liberation Sans",sans-serif;color:#333;text-align:right;width:160px;transform:scale(.25);transform-origin:0 0;'>1995-2005</div>
<div class="t" style='left:991px;top:627.69px;font:400 10.8px/14.04px "Liberation Sans",sans-serif;color:#333;text-align:right;width:160px;transform:scale(.25);transform-origin:0 0;'>(90.00kWh/m2</div>
<div class="t" style='left:991px;top:631.29px;font:400 10.8px/14.04px "Liberation Sans",sans-serif;color:#333;text-align:right;width:160px;transform:scale(.25);transform-origin:0 0;'>per year)</div>
<div class="t" style='left:1027.6px;top:625.89px;font:400 10.8px/14.04px "Liberation Sans",sans-serif;color:#333;text-align:center;width:240px;transform:scale(.25);transform-origin:0 0;'>esp-a35e5412-0036-5790-</div>
<div class="t" style='left:1027.6px;top:629.5px;font:400 10.8px/14.04px "Liberation Sans",sans-serif;color:#333;text-align:center;width:240px;transform:scale(.25);transform-origin:0 0;'>b1d5-703e2000fac7</div>
<div class="b" style="left:881.5px;top:636.15px;width:215.5px;height:14.5px;background:#f5f5f5;"></div>
<div class="t" style='left:884.3px;top:642.06px;font:700 11.6px/15.08px "Liberation Sans",sans-serif;color:#222;transform:scale(.25);transform-origin:0 0;'>4</div>
<div class="t" style='left:900px;top:642.06px;font:400 11.6px/15.08px "Liberation Sans",sans-serif;color:#333;text-align:center;width:240px;transform:scale(.25);transform-origin:0 0;'>AGE_2005_2015</div>
<div class="t" style='left:961.6px;top:642.06px;font:400 11.6px/15.08px "Liberation Sans",sans-serif;color:#333;text-align:right;width:160px;transform:scale(.25);transform-origin:0 0;'>70.00</div>
<div class="t" style='left:991px;top:638.59px;font:400 10.8px/14.04px "Liberation Sans",sans-serif;color:#333;text-align:right;width:160px;transform:scale(.25);transform-origin:0 0;'>2005-2015</div>
<div class="t" style='left:991px;top:642.19px;font:400 10.8px/14.04px "Liberation Sans",sans-serif;color:#333;text-align:right;width:160px;transform:scale(.25);transform-origin:0 0;'>(70.00kWh/m2</div>
<div class="t" style='left:991px;top:645.79px;font:400 10.8px/14.04px "Liberation Sans",sans-serif;color:#333;text-align:right;width:160px;transform:scale(.25);transform-origin:0 0;'>per year)</div>
<div class="t" style='left:1027.6px;top:640.39px;font:400 10.8px/14.04px "Liberation Sans",sans-serif;color:#333;text-align:center;width:240px;transform:scale(.25);transform-origin:0 0;'>esp-c7d4c37a-8f2e-5909-</div>
<div class="t" style='left:1027.6px;top:644.0px;font:400 10.8px/14.04px "Liberation Sans",sans-serif;color:#333;text-align:center;width:240px;transform:scale(.25);transform-origin:0 0;'>a7c1-88b2f0c1e2d3</div>
<div class="b" style="left:1094.3px;top:566.5px;width:3px;height:3px;background:#f1f1f1;"></div>
<div class="b" style="left:1097px;top:571.5px;width:3.2px;height:73px;background:#c1c1c1;"></div>
</div></div>
</body></html>
